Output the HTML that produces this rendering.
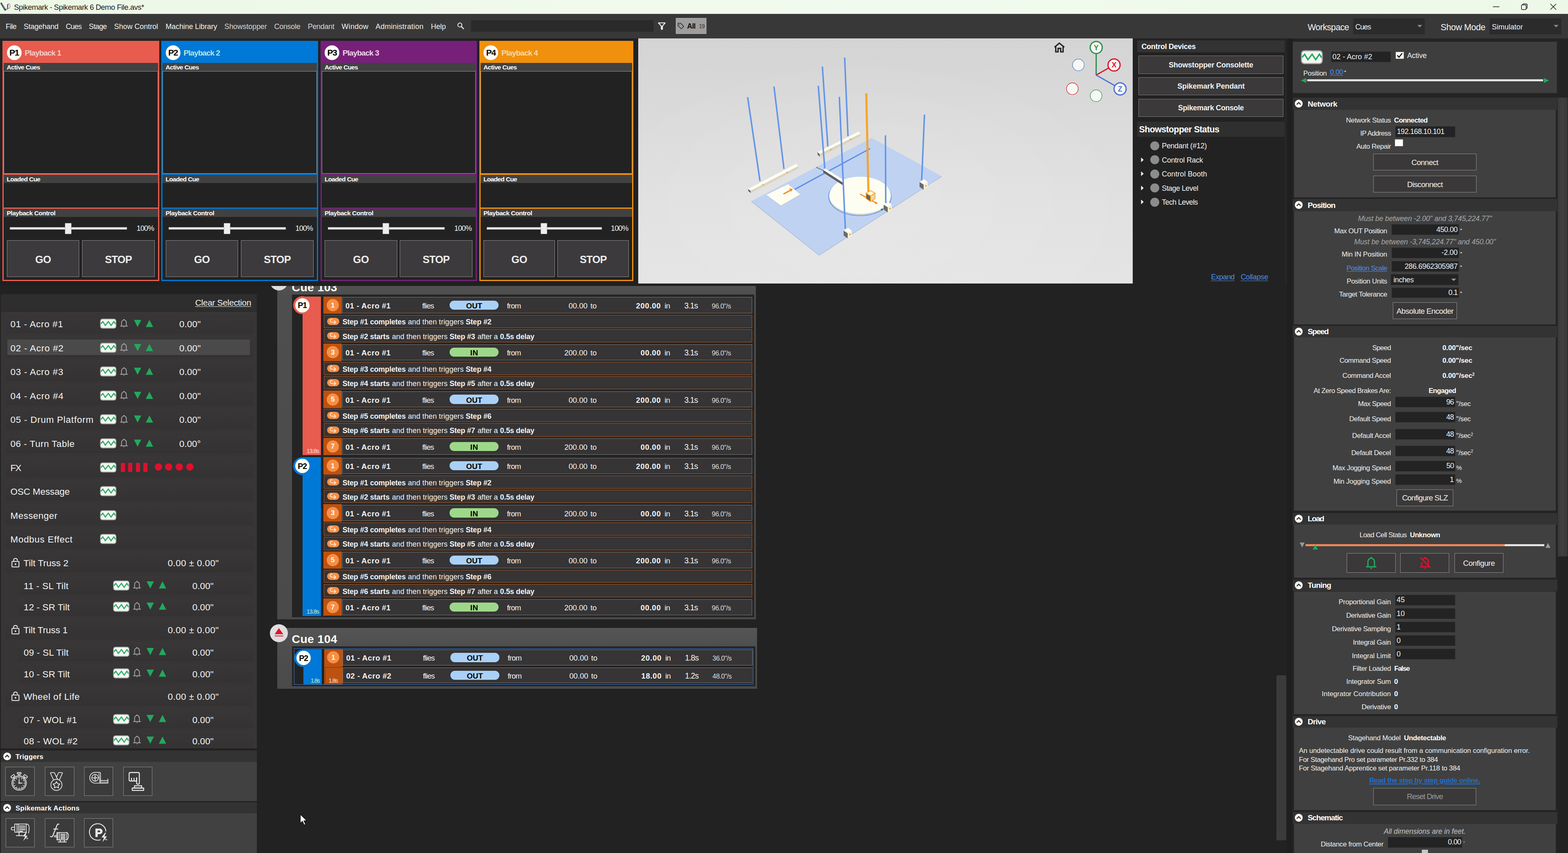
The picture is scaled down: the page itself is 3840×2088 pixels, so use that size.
<!DOCTYPE html>
<html><head><meta charset="utf-8"><title>Spikemark - Spikemark 6 Demo File.avs*</title>
<style>
html,body{margin:0;padding:0;background:#222;}
body{width:3840px;height:2088px;position:relative;overflow:hidden;font-family:"Liberation Sans",sans-serif;}
div{position:absolute;box-sizing:border-box;}
.t{position:absolute;white-space:nowrap;line-height:1;}
svg{position:absolute;overflow:visible;}
</style></head><body>
<div style="left:0px;top:0px;width:3840px;height:34px;background:linear-gradient(90deg,#ecf7e6 0%,#f1faed 40%,#f1faee 60%,#edf8e8 100%);"></div>
<svg style="left:0px;top:0px" width="30" height="34" viewBox="0 0 30 34"><path d="M3.2 8.5 L12.6 24.2" stroke="#3f4b5c" stroke-width="4.2" stroke-linecap="round"/><path d="M4.6 10.2 L11.6 22" stroke="#aab8cc" stroke-width="1.3" stroke-dasharray="1.6 1.6"/><path d="M12.4 23.6 L14 26.4 L13.2 22.8 Z" fill="#2c3440"/><path d="M13.6 23.6 Q15.6 21.6 17 22.4 Q18.6 23.2 19.2 20.4" stroke="#6e1d52" stroke-width="1.4" fill="none"/><ellipse cx="21.6" cy="15" rx="3.4" ry="5.9" transform="rotate(9 21.6 15)" fill="#fbf7ea" stroke="#8a8a8a" stroke-width="1.3"/><path d="M19.3 20.6 Q16.6 14 20.2 9.6" stroke="#7a1f5a" stroke-width="1.9" fill="none"/><ellipse cx="21.4" cy="15.2" rx="1.5" ry="3.6" transform="rotate(9 21.4 15.2)" fill="none" stroke="#d9a0c8" stroke-width="0.9"/></svg>
<span class="t" style="left:34.20px;top:9px;font-size:18.5px;color:#1a1a1a;letter-spacing:-0.492px;">Spikemark - Spikemark 6 Demo File.avs*</span>
<svg style="left:3640px;top:0" width="200" height="34" viewBox="0 0 200 34"><g stroke="#1a1a1a" stroke-width="1.5" fill="none"><path d="M16 16.5 H32"/><rect x="86" y="12" width="11.5" height="11.5" rx="2.5"/><path d="M89 12 V11.5 Q89 9.5 91 9.5 H97.5 Q100 9.5 100 12 V18.5 Q100 20.5 98 20.5 H97.5"/><path d="M157 9.5 L171 23.5 M171 9.5 L157 23.5"/></g></svg>
<div style="left:0px;top:34px;width:3840px;height:60px;background:#383838;"></div>
<span class="t" style="left:14.00px;top:56px;font-size:18px;color:#f2f2f2;letter-spacing:-0.751px;">File</span>
<span class="t" style="left:58.00px;top:56px;font-size:18px;color:#f2f2f2;letter-spacing:-0.231px;">Stagehand</span>
<span class="t" style="left:161.00px;top:56px;font-size:18px;color:#f2f2f2;letter-spacing:-0.880px;">Cues</span>
<span class="t" style="left:217.50px;top:56px;font-size:18px;color:#f2f2f2;letter-spacing:-0.608px;">Stage</span>
<span class="t" style="left:279.50px;top:56px;font-size:18px;color:#f2f2f2;letter-spacing:-0.046px;">Show Control</span>
<span class="t" style="left:405.50px;top:56px;font-size:18px;color:#f2f2f2;letter-spacing:-0.124px;">Machine Library</span>
<span class="t" style="left:549.50px;top:56px;font-size:18px;color:#d6d6d6;letter-spacing:-0.079px;">Showstopper</span>
<span class="t" style="left:671.50px;top:56px;font-size:18px;color:#d6d6d6;letter-spacing:-0.306px;">Console</span>
<span class="t" style="left:753.70px;top:56px;font-size:18px;color:#d6d6d6;letter-spacing:-0.309px;">Pendant</span>
<span class="t" style="left:836.60px;top:56px;font-size:18px;color:#f2f2f2;letter-spacing:0.280px;">Window</span>
<span class="t" style="left:919.80px;top:56px;font-size:18px;color:#f2f2f2;letter-spacing:0.239px;">Administration</span>
<span class="t" style="left:1055.20px;top:56px;font-size:18px;color:#f2f2f2;letter-spacing:-0.055px;">Help</span>
<svg style="left:1119px;top:54px" width="20" height="20" viewBox="0 0 20 20"><circle cx="7.2" cy="7.2" r="4.9" stroke="#f0f0f0" stroke-width="2" fill="none"/><path d="M10.8 10.8 L16.2 16.4" stroke="#f0f0f0" stroke-width="2.4" stroke-linecap="round"/></svg>
<div style="left:1152.5px;top:48.5px;width:448.5px;height:29px;background:#2a2a2a;border:1.5px solid #2f2f2f;"></div>
<svg style="left:1610px;top:53px" width="22" height="22" viewBox="0 0 22 22"><path d="M2.5 3 H19 L12.3 10.8 V18.6 H9.6 V10.8 Z" stroke="#f5f5f5" stroke-width="2.2" fill="none" stroke-linejoin="round"/><path d="M9.6 11 H12.3 V18.6 H9.6 Z" fill="#f5f5f5"/></svg>
<div style="left:1654.5px;top:43.5px;width:75.5px;height:39px;background:#9e9e9e;border:1px solid #b4b4b4;"></div>
<svg style="left:1659px;top:55px" width="18" height="18" viewBox="0 0 18 18"><path d="M1.5 2 H8 L15.5 9.5 L9.5 15.5 L1.5 8 Z" stroke="#222" stroke-width="1.5" fill="none" stroke-linejoin="round"/><circle cx="5" cy="5.5" r="1" fill="#222"/></svg>
<span class="t" style="left:1682.50px;top:55px;font-size:18px;color:#111;font-weight:700;letter-spacing:-0.834px;">All</span>
<span class="t" style="left:1711.50px;top:57px;font-size:14px;color:#333;letter-spacing:-1.036px;">19</span>
<span class="t" style="left:3202.50px;top:57px;font-size:21.5px;color:#f2f2f2;letter-spacing:-0.683px;">Workspace</span>
<div style="left:3312.5px;top:43.5px;width:177.5px;height:41.5px;background:#2b2b2b;border:1px solid #333;"></div>
<span class="t" style="left:3319.00px;top:57px;font-size:18px;color:#f2f2f2;letter-spacing:-1.005px;">Cues</span>
<svg style="left:3470px;top:60px" width="14" height="8"><path d="M1 1 H13 L7 7 Z" fill="#8a8a8a"/></svg>
<span class="t" style="left:3528.00px;top:57px;font-size:21.5px;color:#f2f2f2;letter-spacing:-0.449px;">Show Mode</span>
<div style="left:3646.5px;top:43.5px;width:177.5px;height:41.5px;background:#2b2b2b;border:1px solid #333;"></div>
<span class="t" style="left:3653.50px;top:57px;font-size:18px;color:#f2f2f2;">Simulator</span>
<svg style="left:3804px;top:60px" width="14" height="8"><path d="M1 1 H13 L7 7 Z" fill="#8a8a8a"/></svg>
<div style="left:6px;top:100px;width:383.5px;height:588px;background:#e85b4f;"></div>
<div style="left:16.5px;top:111px;width:36px;height:36px;background:#fffef4;border-radius:18px;"></div>
<span class="t" style="left:23.00px;top:118px;font-size:21px;color:#000;font-weight:700;letter-spacing:-1.343px;">P1</span>
<span class="t" style="left:60.50px;top:120px;font-size:19px;color:#f7cfca;font-weight:700;letter-spacing:-0.924px;">Playback 1</span>
<div style="left:9px;top:154px;width:377.5px;height:20px;background:#414141;"></div>
<span class="t" style="left:16.50px;top:157px;font-size:15.5px;color:#fff;font-weight:700;letter-spacing:-0.657px;">Active Cues</span>
<div style="left:9px;top:174px;width:377.5px;height:250.5px;background:#222;border:1px solid #9a9a9a;"></div>
<div style="left:9px;top:427.5px;width:377.5px;height:21px;background:#414141;"></div>
<span class="t" style="left:16.50px;top:431px;font-size:15.5px;color:#fff;font-weight:700;letter-spacing:-0.670px;">Loaded Cue</span>
<div style="left:9px;top:448px;width:377.5px;height:59.5px;background:#222;"></div>
<div style="left:9px;top:510.5px;width:377.5px;height:20px;background:#414141;"></div>
<span class="t" style="left:16.50px;top:514px;font-size:15.5px;color:#fff;font-weight:700;letter-spacing:-0.476px;">Playback Control</span>
<div style="left:9px;top:530.5px;width:377.5px;height:154px;background:#222;"></div>
<div style="left:24px;top:556px;width:287px;height:6px;background:#e4e4e4;border:1px solid #bdbdbd;"></div>
<div style="left:159px;top:546px;width:16px;height:27px;background:#ededed;border:1px solid #b0b0b0;border-radius:1px;"></div>
<span class="t" style="left:334.50px;top:550px;font-size:18px;color:#f2f2f2;letter-spacing:-0.884px;">100%</span>
<div style="left:16.7px;top:588px;width:177.7px;height:89.5px;background:#3c3a3c;border:1.5px solid #8f8f8f;"></div>
<span class="t" style="left:86.20px;top:623px;font-size:25.5px;color:#ececec;font-weight:700;letter-spacing:-0.485px;">GO</span>
<div style="left:201.1px;top:588px;width:177.7px;height:89.5px;background:#3c3a3c;border:1.5px solid #8f8f8f;"></div>
<span class="t" style="left:256.95px;top:623px;font-size:25.5px;color:#ececec;font-weight:700;letter-spacing:-0.742px;">STOP</span>
<div style="left:395px;top:100px;width:383.5px;height:588px;background:#0078d7;"></div>
<div style="left:405.5px;top:111px;width:36px;height:36px;background:#fffef4;border-radius:18px;"></div>
<span class="t" style="left:412.00px;top:118px;font-size:21px;color:#000;font-weight:700;letter-spacing:-1.343px;">P2</span>
<span class="t" style="left:449.50px;top:120px;font-size:19px;color:#bfe6d8;font-weight:700;letter-spacing:-0.924px;">Playback 2</span>
<div style="left:398px;top:154px;width:377.5px;height:20px;background:#414141;"></div>
<span class="t" style="left:405.50px;top:157px;font-size:15.5px;color:#fff;font-weight:700;letter-spacing:-0.657px;">Active Cues</span>
<div style="left:398px;top:174px;width:377.5px;height:250.5px;background:#222;border:1px solid #9a9a9a;"></div>
<div style="left:398px;top:427.5px;width:377.5px;height:21px;background:#414141;"></div>
<span class="t" style="left:405.50px;top:431px;font-size:15.5px;color:#fff;font-weight:700;letter-spacing:-0.670px;">Loaded Cue</span>
<div style="left:398px;top:448px;width:377.5px;height:59.5px;background:#222;"></div>
<div style="left:398px;top:510.5px;width:377.5px;height:20px;background:#414141;"></div>
<span class="t" style="left:405.50px;top:514px;font-size:15.5px;color:#fff;font-weight:700;letter-spacing:-0.476px;">Playback Control</span>
<div style="left:398px;top:530.5px;width:377.5px;height:154px;background:#222;"></div>
<div style="left:413px;top:556px;width:287px;height:6px;background:#e4e4e4;border:1px solid #bdbdbd;"></div>
<div style="left:548px;top:546px;width:16px;height:27px;background:#ededed;border:1px solid #b0b0b0;border-radius:1px;"></div>
<span class="t" style="left:723.50px;top:550px;font-size:18px;color:#f2f2f2;letter-spacing:-0.884px;">100%</span>
<div style="left:405.7px;top:588px;width:177.7px;height:89.5px;background:#3c3a3c;border:1.5px solid #8f8f8f;"></div>
<span class="t" style="left:475.20px;top:623px;font-size:25.5px;color:#ececec;font-weight:700;letter-spacing:-0.485px;">GO</span>
<div style="left:590.1px;top:588px;width:177.7px;height:89.5px;background:#3c3a3c;border:1.5px solid #8f8f8f;"></div>
<span class="t" style="left:645.95px;top:623px;font-size:25.5px;color:#ececec;font-weight:700;letter-spacing:-0.742px;">STOP</span>
<div style="left:784.5px;top:100px;width:383px;height:588px;background:#77207a;"></div>
<div style="left:795px;top:111px;width:36px;height:36px;background:#fffef4;border-radius:18px;"></div>
<span class="t" style="left:801.50px;top:118px;font-size:21px;color:#000;font-weight:700;letter-spacing:-1.343px;">P3</span>
<span class="t" style="left:839.00px;top:120px;font-size:19px;color:#ecd6ec;font-weight:700;letter-spacing:-0.924px;">Playback 3</span>
<div style="left:787.5px;top:154px;width:377px;height:20px;background:#414141;"></div>
<span class="t" style="left:795.00px;top:157px;font-size:15.5px;color:#fff;font-weight:700;letter-spacing:-0.657px;">Active Cues</span>
<div style="left:787.5px;top:174px;width:377px;height:250.5px;background:#222;border:1px solid #9a9a9a;"></div>
<div style="left:787.5px;top:427.5px;width:377px;height:21px;background:#414141;"></div>
<span class="t" style="left:795.00px;top:431px;font-size:15.5px;color:#fff;font-weight:700;letter-spacing:-0.670px;">Loaded Cue</span>
<div style="left:787.5px;top:448px;width:377px;height:59.5px;background:#222;"></div>
<div style="left:787.5px;top:510.5px;width:377px;height:20px;background:#414141;"></div>
<span class="t" style="left:795.00px;top:514px;font-size:15.5px;color:#fff;font-weight:700;letter-spacing:-0.476px;">Playback Control</span>
<div style="left:787.5px;top:530.5px;width:377px;height:154px;background:#222;"></div>
<div style="left:802.5px;top:556px;width:286.626px;height:6px;background:#e4e4e4;border:1px solid #bdbdbd;"></div>
<div style="left:937.324px;top:546px;width:16px;height:27px;background:#ededed;border:1px solid #b0b0b0;border-radius:1px;"></div>
<span class="t" style="left:1112.50px;top:550px;font-size:18px;color:#f2f2f2;letter-spacing:-0.884px;">100%</span>
<div style="left:795.2px;top:588px;width:177.468px;height:89.5px;background:#3c3a3c;border:1.5px solid #8f8f8f;"></div>
<span class="t" style="left:864.58px;top:623px;font-size:25.5px;color:#ececec;font-weight:700;letter-spacing:-0.485px;">GO</span>
<div style="left:979.332px;top:588px;width:177.468px;height:89.5px;background:#3c3a3c;border:1.5px solid #8f8f8f;"></div>
<span class="t" style="left:1035.07px;top:623px;font-size:25.5px;color:#ececec;font-weight:700;letter-spacing:-0.742px;">STOP</span>
<div style="left:1173.5px;top:100px;width:377.5px;height:588px;background:#f0900c;"></div>
<div style="left:1184px;top:111px;width:36px;height:36px;background:#fffef4;border-radius:18px;"></div>
<span class="t" style="left:1190.50px;top:118px;font-size:21px;color:#000;font-weight:700;letter-spacing:-1.343px;">P4</span>
<span class="t" style="left:1228.00px;top:120px;font-size:19px;color:#f6dca6;font-weight:700;letter-spacing:-0.924px;">Playback 4</span>
<div style="left:1176.5px;top:154px;width:371.5px;height:20px;background:#414141;"></div>
<span class="t" style="left:1184.00px;top:157px;font-size:15.5px;color:#fff;font-weight:700;letter-spacing:-0.657px;">Active Cues</span>
<div style="left:1176.5px;top:174px;width:371.5px;height:250.5px;background:#222;border:1px solid #9a9a9a;"></div>
<div style="left:1176.5px;top:427.5px;width:371.5px;height:21px;background:#414141;"></div>
<span class="t" style="left:1184.00px;top:431px;font-size:15.5px;color:#fff;font-weight:700;letter-spacing:-0.670px;">Loaded Cue</span>
<div style="left:1176.5px;top:448px;width:371.5px;height:59.5px;background:#222;"></div>
<div style="left:1176.5px;top:510.5px;width:371.5px;height:20px;background:#414141;"></div>
<span class="t" style="left:1184.00px;top:514px;font-size:15.5px;color:#fff;font-weight:700;letter-spacing:-0.476px;">Playback Control</span>
<div style="left:1176.5px;top:530.5px;width:371.5px;height:154px;background:#222;"></div>
<div style="left:1191.5px;top:556px;width:282.51px;height:6px;background:#e4e4e4;border:1px solid #bdbdbd;"></div>
<div style="left:1324.39px;top:546px;width:16px;height:27px;background:#ededed;border:1px solid #b0b0b0;border-radius:1px;"></div>
<span class="t" style="left:1496.00px;top:550px;font-size:18px;color:#f2f2f2;letter-spacing:-0.884px;">100%</span>
<div style="left:1184.2px;top:588px;width:174.92px;height:89.5px;background:#3c3a3c;border:1.5px solid #8f8f8f;"></div>
<span class="t" style="left:1252.31px;top:623px;font-size:25.5px;color:#ececec;font-weight:700;letter-spacing:-0.485px;">GO</span>
<div style="left:1365.38px;top:588px;width:174.92px;height:89.5px;background:#3c3a3c;border:1.5px solid #8f8f8f;"></div>
<span class="t" style="left:1419.84px;top:623px;font-size:25.5px;color:#ececec;font-weight:700;letter-spacing:-0.742px;">STOP</span>
<div style="left:0px;top:688px;width:1560px;height:12px;background:#202020;"></div>
<div style="left:2px;top:719.5px;width:627px;height:1112.5px;background:#373536;"></div>
<div style="left:2px;top:719.5px;width:627px;height:42.5px;background:#2e2e2e;"></div>
<div style="left:2px;top:761px;width:627px;height:2px;background:#2a2a2a;"></div>
<span class="t" style="left:478.00px;top:730px;font-size:21px;color:#f2f2f2;letter-spacing:-0.360px;text-decoration:underline;text-underline-offset:2px;text-decoration-thickness:1.3px;">Clear Selection</span>
<div style="left:14px;top:764px;width:606px;height:52px;background:linear-gradient(180deg,#383637,#343233);"></div>
<span class="t" style="left:25.50px;top:783px;font-size:22.5px;color:#f4f4f4;letter-spacing:0.681px;">01 - Acro #1</span>
<svg style="left:245.2px;top:780px" width="40" height="24.5" viewBox="0 0 40 24.5" preserveAspectRatio="none"><rect x="1" y="1" width="38" height="22.5" rx="5" fill="#f3f6f1" stroke="#a6a6a6" stroke-width="2"/><path d="M2.2 12.6 L6.8 7.2 L12.8 16.6 L20.4 7 L27 16.6 L33.8 7 L37.6 13" fill="none" stroke="#22a95e" stroke-width="2.5" stroke-linejoin="miter"/></svg>
<svg style="left:293.8px;top:780.4px" width="19" height="23" viewBox="0 0 19 23"><path d="M1 18.2 H18 M3.6 18 V10.2 C3.6 5.6 6.2 3.4 9.5 3.4 C12.8 3.4 15.4 5.6 15.4 10.2 V18" fill="none" stroke="#a8a8a8" stroke-width="1.9" stroke-linecap="round"/><circle cx="9.5" cy="2.2" r="1.5" fill="#a8a8a8"/><path d="M7.6 20.2 Q9.5 23.5 11.4 20.2 Z" fill="#a8a8a8"/></svg>
<svg style="left:327.5px;top:783px" width="18" height="18"><path d="M0 0 H18 L9 17.5 Z" fill="#22a95e"/></svg>
<svg style="left:357.3px;top:783px" width="18" height="18"><path d="M0 17.5 H18 L9 0 Z" fill="#22a95e"/></svg>
<span class="t" style="left:439.00px;top:783px;font-size:22.5px;color:#f4f4f4;letter-spacing:0.164px;">0.00"</span>
<div style="left:14px;top:822.6px;width:606px;height:52px;background:linear-gradient(180deg,#383637,#343233);"></div>
<div style="left:18px;top:831.1px;width:594px;height:37.5px;background:#4a4a4a;"></div>
<span class="t" style="left:25.50px;top:842px;font-size:22.5px;color:#f4f4f4;letter-spacing:0.765px;">02 - Acro #2</span>
<svg style="left:245.2px;top:838.6px" width="40" height="24.5" viewBox="0 0 40 24.5" preserveAspectRatio="none"><rect x="1" y="1" width="38" height="22.5" rx="5" fill="#f3f6f1" stroke="#a6a6a6" stroke-width="2"/><path d="M2.2 12.6 L6.8 7.2 L12.8 16.6 L20.4 7 L27 16.6 L33.8 7 L37.6 13" fill="none" stroke="#22a95e" stroke-width="2.5" stroke-linejoin="miter"/></svg>
<svg style="left:293.8px;top:839px" width="19" height="23" viewBox="0 0 19 23"><path d="M1 18.2 H18 M3.6 18 V10.2 C3.6 5.6 6.2 3.4 9.5 3.4 C12.8 3.4 15.4 5.6 15.4 10.2 V18" fill="none" stroke="#a8a8a8" stroke-width="1.9" stroke-linecap="round"/><circle cx="9.5" cy="2.2" r="1.5" fill="#a8a8a8"/><path d="M7.6 20.2 Q9.5 23.5 11.4 20.2 Z" fill="#a8a8a8"/></svg>
<svg style="left:327.5px;top:841.6px" width="18" height="18"><path d="M0 0 H18 L9 17.5 Z" fill="#22a95e"/></svg>
<svg style="left:357.3px;top:841.6px" width="18" height="18"><path d="M0 17.5 H18 L9 0 Z" fill="#22a95e"/></svg>
<span class="t" style="left:439.00px;top:842px;font-size:22.5px;color:#f4f4f4;letter-spacing:0.164px;">0.00"</span>
<div style="left:14px;top:881.2px;width:606px;height:52px;background:linear-gradient(180deg,#383637,#343233);"></div>
<span class="t" style="left:25.50px;top:900px;font-size:22.5px;color:#f4f4f4;letter-spacing:0.723px;">03 - Acro #3</span>
<svg style="left:245.2px;top:897.2px" width="40" height="24.5" viewBox="0 0 40 24.5" preserveAspectRatio="none"><rect x="1" y="1" width="38" height="22.5" rx="5" fill="#f3f6f1" stroke="#a6a6a6" stroke-width="2"/><path d="M2.2 12.6 L6.8 7.2 L12.8 16.6 L20.4 7 L27 16.6 L33.8 7 L37.6 13" fill="none" stroke="#22a95e" stroke-width="2.5" stroke-linejoin="miter"/></svg>
<svg style="left:293.8px;top:897.6px" width="19" height="23" viewBox="0 0 19 23"><path d="M1 18.2 H18 M3.6 18 V10.2 C3.6 5.6 6.2 3.4 9.5 3.4 C12.8 3.4 15.4 5.6 15.4 10.2 V18" fill="none" stroke="#a8a8a8" stroke-width="1.9" stroke-linecap="round"/><circle cx="9.5" cy="2.2" r="1.5" fill="#a8a8a8"/><path d="M7.6 20.2 Q9.5 23.5 11.4 20.2 Z" fill="#a8a8a8"/></svg>
<svg style="left:327.5px;top:900.2px" width="18" height="18"><path d="M0 0 H18 L9 17.5 Z" fill="#22a95e"/></svg>
<svg style="left:357.3px;top:900.2px" width="18" height="18"><path d="M0 17.5 H18 L9 0 Z" fill="#22a95e"/></svg>
<span class="t" style="left:439.00px;top:900px;font-size:22.5px;color:#f4f4f4;letter-spacing:0.164px;">0.00"</span>
<div style="left:14px;top:939.8px;width:606px;height:52px;background:linear-gradient(180deg,#383637,#343233);"></div>
<span class="t" style="left:25.50px;top:959px;font-size:22.5px;color:#f4f4f4;letter-spacing:0.765px;">04 - Acro #4</span>
<svg style="left:245.2px;top:955.8px" width="40" height="24.5" viewBox="0 0 40 24.5" preserveAspectRatio="none"><rect x="1" y="1" width="38" height="22.5" rx="5" fill="#f3f6f1" stroke="#a6a6a6" stroke-width="2"/><path d="M2.2 12.6 L6.8 7.2 L12.8 16.6 L20.4 7 L27 16.6 L33.8 7 L37.6 13" fill="none" stroke="#22a95e" stroke-width="2.5" stroke-linejoin="miter"/></svg>
<svg style="left:293.8px;top:956.2px" width="19" height="23" viewBox="0 0 19 23"><path d="M1 18.2 H18 M3.6 18 V10.2 C3.6 5.6 6.2 3.4 9.5 3.4 C12.8 3.4 15.4 5.6 15.4 10.2 V18" fill="none" stroke="#a8a8a8" stroke-width="1.9" stroke-linecap="round"/><circle cx="9.5" cy="2.2" r="1.5" fill="#a8a8a8"/><path d="M7.6 20.2 Q9.5 23.5 11.4 20.2 Z" fill="#a8a8a8"/></svg>
<svg style="left:327.5px;top:958.8px" width="18" height="18"><path d="M0 0 H18 L9 17.5 Z" fill="#22a95e"/></svg>
<svg style="left:357.3px;top:958.8px" width="18" height="18"><path d="M0 17.5 H18 L9 0 Z" fill="#22a95e"/></svg>
<span class="t" style="left:439.00px;top:959px;font-size:22.5px;color:#f4f4f4;letter-spacing:0.164px;">0.00"</span>
<div style="left:14px;top:998.4px;width:606px;height:52px;background:linear-gradient(180deg,#383637,#343233);"></div>
<span class="t" style="left:25.50px;top:1017px;font-size:22.5px;color:#f4f4f4;letter-spacing:0.775px;">05 - Drum Platform</span>
<svg style="left:245.2px;top:1014.4px" width="40" height="24.5" viewBox="0 0 40 24.5" preserveAspectRatio="none"><rect x="1" y="1" width="38" height="22.5" rx="5" fill="#f3f6f1" stroke="#a6a6a6" stroke-width="2"/><path d="M2.2 12.6 L6.8 7.2 L12.8 16.6 L20.4 7 L27 16.6 L33.8 7 L37.6 13" fill="none" stroke="#22a95e" stroke-width="2.5" stroke-linejoin="miter"/></svg>
<svg style="left:293.8px;top:1014.8px" width="19" height="23" viewBox="0 0 19 23"><path d="M1 18.2 H18 M3.6 18 V10.2 C3.6 5.6 6.2 3.4 9.5 3.4 C12.8 3.4 15.4 5.6 15.4 10.2 V18" fill="none" stroke="#a8a8a8" stroke-width="1.9" stroke-linecap="round"/><circle cx="9.5" cy="2.2" r="1.5" fill="#a8a8a8"/><path d="M7.6 20.2 Q9.5 23.5 11.4 20.2 Z" fill="#a8a8a8"/></svg>
<svg style="left:327.5px;top:1017.4px" width="18" height="18"><path d="M0 0 H18 L9 17.5 Z" fill="#22a95e"/></svg>
<svg style="left:357.3px;top:1017.4px" width="18" height="18"><path d="M0 17.5 H18 L9 0 Z" fill="#22a95e"/></svg>
<span class="t" style="left:439.00px;top:1017px;font-size:22.5px;color:#f4f4f4;letter-spacing:0.164px;">0.00"</span>
<div style="left:14px;top:1057px;width:606px;height:52px;background:linear-gradient(180deg,#383637,#343233);"></div>
<span class="t" style="left:25.50px;top:1076px;font-size:22.5px;color:#f4f4f4;letter-spacing:0.521px;">06 - Turn Table</span>
<svg style="left:245.2px;top:1073px" width="40" height="24.5" viewBox="0 0 40 24.5" preserveAspectRatio="none"><rect x="1" y="1" width="38" height="22.5" rx="5" fill="#f3f6f1" stroke="#a6a6a6" stroke-width="2"/><path d="M2.2 12.6 L6.8 7.2 L12.8 16.6 L20.4 7 L27 16.6 L33.8 7 L37.6 13" fill="none" stroke="#22a95e" stroke-width="2.5" stroke-linejoin="miter"/></svg>
<svg style="left:293.8px;top:1073.4px" width="19" height="23" viewBox="0 0 19 23"><path d="M1 18.2 H18 M3.6 18 V10.2 C3.6 5.6 6.2 3.4 9.5 3.4 C12.8 3.4 15.4 5.6 15.4 10.2 V18" fill="none" stroke="#a8a8a8" stroke-width="1.9" stroke-linecap="round"/><circle cx="9.5" cy="2.2" r="1.5" fill="#a8a8a8"/><path d="M7.6 20.2 Q9.5 23.5 11.4 20.2 Z" fill="#a8a8a8"/></svg>
<svg style="left:327.5px;top:1076px" width="18" height="18"><path d="M0 0 H18 L9 17.5 Z" fill="#22a95e"/></svg>
<svg style="left:357.3px;top:1076px" width="18" height="18"><path d="M0 17.5 H18 L9 0 Z" fill="#22a95e"/></svg>
<span class="t" style="left:439.00px;top:1076px;font-size:22.5px;color:#f4f4f4;letter-spacing:-0.038px;">0.00°</span>
<div style="left:14px;top:1115.6px;width:606px;height:52px;background:linear-gradient(180deg,#383637,#343233);"></div>
<span class="t" style="left:25.50px;top:1135px;font-size:22.5px;color:#f4f4f4;letter-spacing:-1.626px;">FX</span>
<svg style="left:245.2px;top:1131.6px" width="40" height="24.5" viewBox="0 0 40 24.5" preserveAspectRatio="none"><rect x="1" y="1" width="38" height="22.5" rx="5" fill="#f3f6f1" stroke="#a6a6a6" stroke-width="2"/><path d="M2.2 12.6 L6.8 7.2 L12.8 16.6 L20.4 7 L27 16.6 L33.8 7 L37.6 13" fill="none" stroke="#22a95e" stroke-width="2.5" stroke-linejoin="miter"/></svg>
<div style="left:296px;top:1132.6px;width:10px;height:22.5px;background:#e0102d;"></div>
<div style="left:314px;top:1132.6px;width:10px;height:22.5px;background:#e0102d;"></div>
<div style="left:332.5px;top:1132.6px;width:10px;height:22.5px;background:#e0102d;"></div>
<div style="left:350.5px;top:1132.6px;width:10px;height:22.5px;background:#e0102d;"></div>
<div style="left:378.5px;top:1134.1px;width:18px;height:18px;background:#e0102d;border-radius:9px;"></div>
<div style="left:404px;top:1134.1px;width:18px;height:18px;background:#e0102d;border-radius:9px;"></div>
<div style="left:430px;top:1134.1px;width:18px;height:18px;background:#e0102d;border-radius:9px;"></div>
<div style="left:455.5px;top:1134.1px;width:18px;height:18px;background:#e0102d;border-radius:9px;"></div>
<div style="left:14px;top:1174.2px;width:606px;height:52px;background:linear-gradient(180deg,#383637,#343233);"></div>
<span class="t" style="left:25.50px;top:1193px;font-size:22.5px;color:#f4f4f4;letter-spacing:-0.101px;">OSC Message</span>
<svg style="left:245.2px;top:1190.2px" width="40" height="24.5" viewBox="0 0 40 24.5" preserveAspectRatio="none"><rect x="1" y="1" width="38" height="22.5" rx="5" fill="#f3f6f1" stroke="#a6a6a6" stroke-width="2"/><path d="M2.2 12.6 L6.8 7.2 L12.8 16.6 L20.4 7 L27 16.6 L33.8 7 L37.6 13" fill="none" stroke="#22a95e" stroke-width="2.5" stroke-linejoin="miter"/></svg>
<div style="left:14px;top:1232.8px;width:606px;height:52px;background:linear-gradient(180deg,#383637,#343233);"></div>
<span class="t" style="left:25.50px;top:1252px;font-size:22.5px;color:#f4f4f4;letter-spacing:0.466px;">Messenger</span>
<svg style="left:245.2px;top:1248.8px" width="40" height="24.5" viewBox="0 0 40 24.5" preserveAspectRatio="none"><rect x="1" y="1" width="38" height="22.5" rx="5" fill="#f3f6f1" stroke="#a6a6a6" stroke-width="2"/><path d="M2.2 12.6 L6.8 7.2 L12.8 16.6 L20.4 7 L27 16.6 L33.8 7 L37.6 13" fill="none" stroke="#22a95e" stroke-width="2.5" stroke-linejoin="miter"/></svg>
<div style="left:14px;top:1291.4px;width:606px;height:52px;background:linear-gradient(180deg,#383637,#343233);"></div>
<span class="t" style="left:25.50px;top:1310px;font-size:22.5px;color:#f4f4f4;letter-spacing:0.699px;">Modbus Effect</span>
<svg style="left:245.2px;top:1307.4px" width="40" height="24.5" viewBox="0 0 40 24.5" preserveAspectRatio="none"><rect x="1" y="1" width="38" height="22.5" rx="5" fill="#f3f6f1" stroke="#a6a6a6" stroke-width="2"/><path d="M2.2 12.6 L6.8 7.2 L12.8 16.6 L20.4 7 L27 16.6 L33.8 7 L37.6 13" fill="none" stroke="#22a95e" stroke-width="2.5" stroke-linejoin="miter"/></svg>
<div style="left:14px;top:1349px;width:606px;height:52px;background:linear-gradient(180deg,#383637,#343233);"></div>
<svg style="left:27.5px;top:1366px" width="20" height="23" viewBox="0 0 20 23"><rect x="1.2" y="8.2" width="17.3" height="13.6" rx="1.5" fill="none" stroke="#f0f0f0" stroke-width="2"/><path d="M5.3 8 V5.6 C5.3 2.6 7.3 1.1 9.9 1.1 C12.5 1.1 14.5 2.6 14.5 5.6 V6.4" fill="none" stroke="#f0f0f0" stroke-width="2"/><circle cx="9.9" cy="15" r="1.9" fill="#f0f0f0"/></svg>
<span class="t" style="left:57.50px;top:1368px;font-size:22.5px;color:#f4f4f4;letter-spacing:0.068px;">Tilt Truss 2</span>
<span class="t" style="left:410.70px;top:1368px;font-size:22.5px;color:#f4f4f4;letter-spacing:0.407px;">0.00 ± 0.00"</span>
<div style="left:45px;top:1409.5px;width:575px;height:46px;background:linear-gradient(180deg,#383637,#343233);"></div>
<span class="t" style="left:58.00px;top:1424px;font-size:22.5px;color:#f4f4f4;letter-spacing:0.413px;">11 - SL Tilt</span>
<svg style="left:277px;top:1420.5px" width="40" height="24.5" viewBox="0 0 40 24.5" preserveAspectRatio="none"><rect x="1" y="1" width="38" height="22.5" rx="5" fill="#f3f6f1" stroke="#a6a6a6" stroke-width="2"/><path d="M2.2 12.6 L6.8 7.2 L12.8 16.6 L20.4 7 L27 16.6 L33.8 7 L37.6 13" fill="none" stroke="#22a95e" stroke-width="2.5" stroke-linejoin="miter"/></svg>
<svg style="left:326px;top:1420.5px" width="19" height="23" viewBox="0 0 19 23"><path d="M1 18.2 H18 M3.6 18 V10.2 C3.6 5.6 6.2 3.4 9.5 3.4 C12.8 3.4 15.4 5.6 15.4 10.2 V18" fill="none" stroke="#a8a8a8" stroke-width="1.9" stroke-linecap="round"/><circle cx="9.5" cy="2.2" r="1.5" fill="#a8a8a8"/><path d="M7.6 20.2 Q9.5 23.5 11.4 20.2 Z" fill="#a8a8a8"/></svg>
<svg style="left:359px;top:1423px" width="18" height="18"><path d="M0 0 H18 L9 17.5 Z" fill="#22a95e"/></svg>
<svg style="left:389px;top:1423px" width="18" height="18"><path d="M0 17.5 H18 L9 0 Z" fill="#22a95e"/></svg>
<span class="t" style="left:471.00px;top:1424px;font-size:22.5px;color:#f4f4f4;letter-spacing:0.044px;">0.00"</span>
<div style="left:45px;top:1461.5px;width:575px;height:46px;background:linear-gradient(180deg,#383637,#343233);"></div>
<span class="t" style="left:58.00px;top:1476px;font-size:22.5px;color:#f4f4f4;letter-spacing:0.143px;">12 - SR Tilt</span>
<svg style="left:277px;top:1472.5px" width="40" height="24.5" viewBox="0 0 40 24.5" preserveAspectRatio="none"><rect x="1" y="1" width="38" height="22.5" rx="5" fill="#f3f6f1" stroke="#a6a6a6" stroke-width="2"/><path d="M2.2 12.6 L6.8 7.2 L12.8 16.6 L20.4 7 L27 16.6 L33.8 7 L37.6 13" fill="none" stroke="#22a95e" stroke-width="2.5" stroke-linejoin="miter"/></svg>
<svg style="left:326px;top:1472.5px" width="19" height="23" viewBox="0 0 19 23"><path d="M1 18.2 H18 M3.6 18 V10.2 C3.6 5.6 6.2 3.4 9.5 3.4 C12.8 3.4 15.4 5.6 15.4 10.2 V18" fill="none" stroke="#a8a8a8" stroke-width="1.9" stroke-linecap="round"/><circle cx="9.5" cy="2.2" r="1.5" fill="#a8a8a8"/><path d="M7.6 20.2 Q9.5 23.5 11.4 20.2 Z" fill="#a8a8a8"/></svg>
<svg style="left:359px;top:1475px" width="18" height="18"><path d="M0 0 H18 L9 17.5 Z" fill="#22a95e"/></svg>
<svg style="left:389px;top:1475px" width="18" height="18"><path d="M0 17.5 H18 L9 0 Z" fill="#22a95e"/></svg>
<span class="t" style="left:471.00px;top:1476px;font-size:22.5px;color:#f4f4f4;letter-spacing:0.044px;">0.00"</span>
<div style="left:14px;top:1513px;width:606px;height:52px;background:linear-gradient(180deg,#383637,#343233);"></div>
<svg style="left:27.5px;top:1530px" width="20" height="23" viewBox="0 0 20 23"><rect x="1.2" y="8.2" width="17.3" height="13.6" rx="1.5" fill="none" stroke="#f0f0f0" stroke-width="2"/><path d="M5.3 8 V5.6 C5.3 2.6 7.3 1.1 9.9 1.1 C12.5 1.1 14.5 2.6 14.5 5.6 V6.4" fill="none" stroke="#f0f0f0" stroke-width="2"/><circle cx="9.9" cy="15" r="1.9" fill="#f0f0f0"/></svg>
<span class="t" style="left:57.50px;top:1532px;font-size:22.5px;color:#f4f4f4;letter-spacing:-0.082px;">Tilt Truss 1</span>
<span class="t" style="left:410.70px;top:1532px;font-size:22.5px;color:#f4f4f4;letter-spacing:0.407px;">0.00 ± 0.00"</span>
<div style="left:45px;top:1572px;width:575px;height:46px;background:linear-gradient(180deg,#383637,#343233);"></div>
<span class="t" style="left:58.00px;top:1587px;font-size:22.5px;color:#f4f4f4;letter-spacing:0.274px;">09 - SL Tilt</span>
<svg style="left:277px;top:1583px" width="40" height="24.5" viewBox="0 0 40 24.5" preserveAspectRatio="none"><rect x="1" y="1" width="38" height="22.5" rx="5" fill="#f3f6f1" stroke="#a6a6a6" stroke-width="2"/><path d="M2.2 12.6 L6.8 7.2 L12.8 16.6 L20.4 7 L27 16.6 L33.8 7 L37.6 13" fill="none" stroke="#22a95e" stroke-width="2.5" stroke-linejoin="miter"/></svg>
<svg style="left:326px;top:1583px" width="19" height="23" viewBox="0 0 19 23"><path d="M1 18.2 H18 M3.6 18 V10.2 C3.6 5.6 6.2 3.4 9.5 3.4 C12.8 3.4 15.4 5.6 15.4 10.2 V18" fill="none" stroke="#a8a8a8" stroke-width="1.9" stroke-linecap="round"/><circle cx="9.5" cy="2.2" r="1.5" fill="#a8a8a8"/><path d="M7.6 20.2 Q9.5 23.5 11.4 20.2 Z" fill="#a8a8a8"/></svg>
<svg style="left:359px;top:1585.5px" width="18" height="18"><path d="M0 0 H18 L9 17.5 Z" fill="#22a95e"/></svg>
<svg style="left:389px;top:1585.5px" width="18" height="18"><path d="M0 17.5 H18 L9 0 Z" fill="#22a95e"/></svg>
<span class="t" style="left:471.00px;top:1587px;font-size:22.5px;color:#f4f4f4;letter-spacing:0.044px;">0.00"</span>
<div style="left:45px;top:1625px;width:575px;height:46px;background:linear-gradient(180deg,#383637,#343233);"></div>
<span class="t" style="left:58.00px;top:1640px;font-size:22.5px;color:#f4f4f4;letter-spacing:0.143px;">10 - SR Tilt</span>
<svg style="left:277px;top:1636px" width="40" height="24.5" viewBox="0 0 40 24.5" preserveAspectRatio="none"><rect x="1" y="1" width="38" height="22.5" rx="5" fill="#f3f6f1" stroke="#a6a6a6" stroke-width="2"/><path d="M2.2 12.6 L6.8 7.2 L12.8 16.6 L20.4 7 L27 16.6 L33.8 7 L37.6 13" fill="none" stroke="#22a95e" stroke-width="2.5" stroke-linejoin="miter"/></svg>
<svg style="left:326px;top:1636px" width="19" height="23" viewBox="0 0 19 23"><path d="M1 18.2 H18 M3.6 18 V10.2 C3.6 5.6 6.2 3.4 9.5 3.4 C12.8 3.4 15.4 5.6 15.4 10.2 V18" fill="none" stroke="#a8a8a8" stroke-width="1.9" stroke-linecap="round"/><circle cx="9.5" cy="2.2" r="1.5" fill="#a8a8a8"/><path d="M7.6 20.2 Q9.5 23.5 11.4 20.2 Z" fill="#a8a8a8"/></svg>
<svg style="left:359px;top:1638.5px" width="18" height="18"><path d="M0 0 H18 L9 17.5 Z" fill="#22a95e"/></svg>
<svg style="left:389px;top:1638.5px" width="18" height="18"><path d="M0 17.5 H18 L9 0 Z" fill="#22a95e"/></svg>
<span class="t" style="left:471.00px;top:1640px;font-size:22.5px;color:#f4f4f4;letter-spacing:0.044px;">0.00"</span>
<div style="left:14px;top:1676px;width:606px;height:52px;background:linear-gradient(180deg,#383637,#343233);"></div>
<svg style="left:27.5px;top:1693px" width="20" height="23" viewBox="0 0 20 23"><rect x="1.2" y="8.2" width="17.3" height="13.6" rx="1.5" fill="none" stroke="#f0f0f0" stroke-width="2"/><path d="M5.3 8 V5.6 C5.3 2.6 7.3 1.1 9.9 1.1 C12.5 1.1 14.5 2.6 14.5 5.6 V6.4" fill="none" stroke="#f0f0f0" stroke-width="2"/><circle cx="9.9" cy="15" r="1.9" fill="#f0f0f0"/></svg>
<span class="t" style="left:57.50px;top:1695px;font-size:22.5px;color:#f4f4f4;letter-spacing:0.514px;">Wheel of Life</span>
<span class="t" style="left:410.70px;top:1695px;font-size:22.5px;color:#f4f4f4;letter-spacing:0.407px;">0.00 ± 0.00"</span>
<div style="left:45px;top:1736.5px;width:575px;height:46px;background:linear-gradient(180deg,#383637,#343233);"></div>
<span class="t" style="left:58.00px;top:1752px;font-size:22.5px;color:#f4f4f4;letter-spacing:0.389px;">07 - WOL #1</span>
<svg style="left:277px;top:1747.5px" width="40" height="24.5" viewBox="0 0 40 24.5" preserveAspectRatio="none"><rect x="1" y="1" width="38" height="22.5" rx="5" fill="#f3f6f1" stroke="#a6a6a6" stroke-width="2"/><path d="M2.2 12.6 L6.8 7.2 L12.8 16.6 L20.4 7 L27 16.6 L33.8 7 L37.6 13" fill="none" stroke="#22a95e" stroke-width="2.5" stroke-linejoin="miter"/></svg>
<svg style="left:326px;top:1747.5px" width="19" height="23" viewBox="0 0 19 23"><path d="M1 18.2 H18 M3.6 18 V10.2 C3.6 5.6 6.2 3.4 9.5 3.4 C12.8 3.4 15.4 5.6 15.4 10.2 V18" fill="none" stroke="#a8a8a8" stroke-width="1.9" stroke-linecap="round"/><circle cx="9.5" cy="2.2" r="1.5" fill="#a8a8a8"/><path d="M7.6 20.2 Q9.5 23.5 11.4 20.2 Z" fill="#a8a8a8"/></svg>
<svg style="left:359px;top:1750px" width="18" height="18"><path d="M0 0 H18 L9 17.5 Z" fill="#22a95e"/></svg>
<svg style="left:389px;top:1750px" width="18" height="18"><path d="M0 17.5 H18 L9 0 Z" fill="#22a95e"/></svg>
<span class="t" style="left:471.00px;top:1752px;font-size:22.5px;color:#f4f4f4;letter-spacing:0.044px;">0.00"</span>
<div style="left:45px;top:1789px;width:575px;height:46px;background:linear-gradient(180deg,#383637,#343233);"></div>
<span class="t" style="left:58.00px;top:1804px;font-size:22.5px;color:#f4f4f4;letter-spacing:0.526px;">08 - WOL #2</span>
<svg style="left:277px;top:1800px" width="40" height="24.5" viewBox="0 0 40 24.5" preserveAspectRatio="none"><rect x="1" y="1" width="38" height="22.5" rx="5" fill="#f3f6f1" stroke="#a6a6a6" stroke-width="2"/><path d="M2.2 12.6 L6.8 7.2 L12.8 16.6 L20.4 7 L27 16.6 L33.8 7 L37.6 13" fill="none" stroke="#22a95e" stroke-width="2.5" stroke-linejoin="miter"/></svg>
<svg style="left:326px;top:1800px" width="19" height="23" viewBox="0 0 19 23"><path d="M1 18.2 H18 M3.6 18 V10.2 C3.6 5.6 6.2 3.4 9.5 3.4 C12.8 3.4 15.4 5.6 15.4 10.2 V18" fill="none" stroke="#a8a8a8" stroke-width="1.9" stroke-linecap="round"/><circle cx="9.5" cy="2.2" r="1.5" fill="#a8a8a8"/><path d="M7.6 20.2 Q9.5 23.5 11.4 20.2 Z" fill="#a8a8a8"/></svg>
<svg style="left:359px;top:1802.5px" width="18" height="18"><path d="M0 0 H18 L9 17.5 Z" fill="#22a95e"/></svg>
<svg style="left:389px;top:1802.5px" width="18" height="18"><path d="M0 17.5 H18 L9 0 Z" fill="#22a95e"/></svg>
<span class="t" style="left:471.00px;top:1804px;font-size:22.5px;color:#f4f4f4;letter-spacing:0.044px;">0.00"</span>
<div style="left:0px;top:1832px;width:632px;height:6px;background:#222;"></div>
<div style="left:2px;top:1837.2px;width:627px;height:27.8px;background:#333333;"></div>
<svg style="left:8px;top:1841.8px" width="19" height="19" viewBox="0 0 20 20"><circle cx="10" cy="10" r="10" fill="#fffef6"/><path d="M5 12.3 L10 7.2 L15 12.3" fill="none" stroke="#2a2a2a" stroke-width="2.6"/></svg>
<span class="t" style="left:38.00px;top:1844px;font-size:17px;color:#fff;font-weight:700;letter-spacing:0.178px;">Triggers</span>
<div style="left:2px;top:1865px;width:627px;height:95.5px;background:#414141;"></div>
<div style="left:13.3px;top:1876.8px;width:71.8px;height:71.4px;background:#3b3b3b;border:1.5px solid #8c8c8c;"></div>
<div style="left:109.9px;top:1876.8px;width:71.8px;height:71.4px;background:#3b3b3b;border:1.5px solid #8c8c8c;"></div>
<div style="left:205.5px;top:1876.8px;width:71.8px;height:71.4px;background:#3b3b3b;border:1.5px solid #8c8c8c;"></div>
<div style="left:301.6px;top:1876.8px;width:71.8px;height:71.4px;background:#3b3b3b;border:1.5px solid #8c8c8c;"></div>
<div style="left:0px;top:1960.5px;width:632px;height:3.5px;background:#222;"></div>
<div style="left:2px;top:1963.5px;width:627px;height:27px;background:#333333;"></div>
<svg style="left:8px;top:1967.5px" width="19" height="19" viewBox="0 0 20 20"><circle cx="10" cy="10" r="10" fill="#fffef6"/><path d="M5 12.3 L10 7.2 L15 12.3" fill="none" stroke="#2a2a2a" stroke-width="2.6"/></svg>
<span class="t" style="left:38.00px;top:1970px;font-size:17px;color:#fff;font-weight:700;letter-spacing:0.269px;">Spikemark Actions</span>
<div style="left:2px;top:1990.5px;width:627px;height:97.5px;background:#414141;"></div>
<div style="left:13.9px;top:2002.6px;width:71.6px;height:71.5px;background:#3b3b3b;border:1.5px solid #8c8c8c;"></div>
<div style="left:110.1px;top:2002.6px;width:71.6px;height:71.5px;background:#3b3b3b;border:1.5px solid #8c8c8c;"></div>
<div style="left:205.8px;top:2002.6px;width:71.6px;height:71.5px;background:#3b3b3b;border:1.5px solid #8c8c8c;"></div>
<svg style="left:13.3px;top:1876.8px" width="72" height="72" viewBox="0 0 72 72"><g stroke="#ececec" fill="none" stroke-width="1.7" stroke-linecap="round" stroke-linejoin="round"><circle cx="33.9" cy="39.8" r="17.7"/><circle cx="33.9" cy="39.8" r="14.9" stroke-width="1.4"/><rect x="29.3" y="13.8" width="9.3" height="3.6" rx="0.6"/><path d="M32.2 17.4 V22 M35.7 17.4 V22"/><rect x="-4.6" y="-2.4" width="9.2" height="4.8" rx="0.5" transform="translate(18.4 23.4) rotate(-40)"/><path d="M20.6 26.4 L22.6 28.6"/><rect x="-4.6" y="-2.4" width="9.2" height="4.8" rx="0.5" transform="translate(49.4 23.4) rotate(40)"/><path d="M47.2 26.4 L45.2 28.6"/><path d="M33.90 29.00 L33.90 26.40 M39.30 30.45 L40.60 28.20 M43.25 34.40 L45.50 33.10 M44.70 39.80 L47.30 39.80 M43.25 45.20 L45.50 46.50 M39.30 49.15 L40.60 51.40 M33.90 50.60 L33.90 53.20 M28.50 49.15 L27.20 51.40 M24.55 45.20 L22.30 46.50 M23.10 39.80 L20.50 39.80 M24.55 34.40 L22.30 33.10 M28.50 30.45 L27.20 28.20 " stroke-width="1.3"/><path d="M33.9 38.2 V31.2 M35.5 39.8 H41" stroke-width="1.9"/><circle cx="33.9" cy="39.8" r="1.5" stroke-width="1.3"/></g></svg>
<svg style="left:109.9px;top:1876.8px" width="72" height="72" viewBox="0 0 72 72"><g stroke="#ececec" fill="none" stroke-width="1.7" stroke-linecap="round" stroke-linejoin="round"><circle cx="28.2" cy="44.2" r="13.6"/><path d="M21.2 32.2 L13.6 15.6 Q13.2 14.4 14.6 14.3 L22 14 Q23 14 23.5 15 L31.2 30.8"/><path d="M35.4 32.2 L42.8 15.6 Q43.2 14.4 41.8 14.3 L34.6 14 Q33.6 14 33.1 15 L28.6 24.6"/><polygon points="28.20,36.20 30.85,41.16 36.38,42.14 32.48,46.19 33.25,51.76 28.20,49.30 23.15,51.76 23.92,46.19 20.02,42.14 25.55,41.16" stroke-width="1.8"/></g></svg>
<svg style="left:205.5px;top:1876.8px" width="72" height="72" viewBox="0 0 72 72"><g stroke="#ececec" fill="none" stroke-width="1.7" stroke-linecap="round" stroke-linejoin="round"><path d="M26.9 13.6 H37 Q40.2 13.6 40.2 16.8 V40 H26.9 A13.2 13.2 0 0 1 26.9 13.6 Z"/><path d="M36 16 Q38.4 27 38 39" stroke-width="1.3"/><circle cx="26.9" cy="26.9" r="8.2"/><circle cx="26.9" cy="26.9" r="2.1"/><path d="M26.9 18.7 V24.8 M26.9 29 V35.1 M18.7 26.9 H24.8 M29 26.9 H35.1" stroke-width="1.5"/><path d="M40.2 33.6 H58.3 M58.3 29.9 V40 H40.2"/><path d="M43.5 36 V39.8 M46.5 37 V39.8 M49.5 36 V39.8 M52.5 37 V39.8 M55.5 36 V39.8" stroke-width="1.2"/></g></svg>
<svg style="left:301.6px;top:1876.8px" width="72" height="72" viewBox="0 0 72 72"><g stroke="#ececec" fill="none" stroke-width="1.7" stroke-linecap="round" stroke-linejoin="round"><g stroke-width="2.3"><path d="M32.6 27 V34 M26.3 28 V33.6 M20 28 V33.6"/><path d="M32.6 33.6 Q29.4 36.6 26.3 33.6 Q23.2 36.6 20 33.6 Q16.8 36.8 14.2 33 V17 Q14.2 14 17.2 14 H36.2 Q39.2 14 39.2 17 V39.4 Q39.2 42.6 35.9 42.6 Q32.6 42.6 32.6 39.4 V27"/><rect x="27.4" y="46.4" width="17.4" height="5.6"/><rect x="21.9" y="52" width="28" height="5.8"/></g></g></svg>
<svg style="left:13.9px;top:2002.6px" width="72" height="72" viewBox="0 0 72 72"><g stroke="#ececec" fill="none" stroke-width="1.7" stroke-linecap="round" stroke-linejoin="round"><path d="M50.3 14.2 H22.1 V34.1 H50.3 M27.7 14.2 V34.1 M31.5 14.2 V34.1 M50.3 34.1 V14.2"/><path d="M33.4 19.1 H48 M33.4 23.6 H48 M33.4 28 H48 M33.4 32.3 H42" stroke-width="2.4" stroke-linecap="butt"/><path d="M50.3 13.8 Q58 14 57.4 25 Q57 32 55.6 36.4"/><path d="M22.1 21.9 H16.6 Q13.6 21.9 13.6 25.2 Q13.6 28.5 16.6 28.5 H22.1"/><path d="M32.6 34.1 V42.4 M26 42.4 H41.5" stroke-width="2"/><path d="M50.3 34.1 L42 44 H48.1 L43.7 54.5 L53.1 42.9 H47.6 L51.4 34.1 Z" fill="#ececec" stroke-width="0.6"/><text x="49.6" y="51.4" font-family="Liberation Sans, sans-serif" font-size="6" font-weight="700" fill="#ececec" stroke="none">%</text></g></svg>
<svg style="left:110.1px;top:2002.6px" width="72" height="72" viewBox="0 0 72 72"><g stroke="#ececec" fill="none" stroke-width="1.7" stroke-linecap="round" stroke-linejoin="round"><path d="M34.3 14.6 Q31.4 13.2 29.8 16.6 L19.2 43 Q17.6 46.6 13.6 44.4 M21.6 26.3 H31.5" stroke-width="2.3"/><path d="M53.7 35.2 H29.3 V52.9 H53.7 Z M31.5 35.2 V52.9 M35.4 35.2 V52.9"/><path d="M38.2 39 H50.3 M38.2 42.4 H50.3 M38.2 46.2 H50.3 M38.2 49.6 H50.3" stroke-width="2.2" stroke-linecap="butt"/><path d="M53.7 35.2 Q58 36 57.6 44 Q57.4 50 53.7 52.9"/><path d="M29.3 42.4 H25.6 Q23.2 42.4 23.2 44 Q23.2 45.7 25.6 45.7 H29.3"/><path d="M37.6 52.9 V57.6 M47.6 52.9 V57.6 M32.6 57.9 H52.5" stroke-width="2"/></g></svg>
<svg style="left:205.8px;top:2002.6px" width="72" height="72" viewBox="0 0 72 72"><g stroke="#ececec" fill="none" stroke-width="1.7" stroke-linecap="round" stroke-linejoin="round"><path d="M39.5 52.7 A20.2 20.2 0 1 1 53.3 31.4" stroke-width="2.1"/><text x="26.6" y="45.2" font-family="Liberation Sans, sans-serif" font-weight="700" font-size="28" fill="#ececec" stroke="#ececec" stroke-width="1.3">P</text><path d="M51.4 35.7 L43.1 46.8 H49.2 L45.4 57.3 L55.3 44.6 H49.2 L53.1 35.7 Z" fill="#ececec" stroke-width="0.6"/><text x="51" y="53.6" font-family="Liberation Sans, sans-serif" font-size="6" font-weight="700" fill="#ececec" stroke="none">%</text></g></svg>
<svg style="left:734px;top:1992px" width="20" height="30" viewBox="0 0 20 30"><path d="M1.5 1.5 V23 L6.8 18.2 L10.8 27.5 L14.2 26 L10.3 17 H17.5 Z" fill="#fff" stroke="#111" stroke-width="1.4" stroke-linejoin="round"/></svg>
<div style="left:632px;top:700px;width:2500px;height:1388px;overflow:hidden;">
<div style="left:-632px;top:-700px;width:3840px;height:2088px;">
<div style="left:679.3px;top:676px;width:1171.7px;height:840px;background:linear-gradient(180deg,#545454 0px,#4e4e4e 50px,#4a4a4a 100%);"></div>
<svg style="left:661px;top:667px" width="44" height="44" viewBox="0 0 44 44"><circle cx="22" cy="22" r="22" fill="#dedede"/><path d="M22 9.4 L32.8 24.6 H11.6 Z" fill="#e1142d"/><path d="M11.6 28.7 H32.8" stroke="#e1142d" stroke-width="1.9"/></svg>
<span class="t" style="left:714.50px;top:689px;font-size:28.5px;color:#fffef2;font-weight:700;letter-spacing:0.313px;">Cue 103</span>
<div style="left:714.5px;top:721px;width:1132px;height:790px;background:#242424;border:1px solid #282828;"></div>
<div style="left:741.2px;top:725.7px;width:45px;height:388.7px;background:#e85b4f;"></div>
<div style="left:718px;top:725.2px;width:44px;height:44px;background:#e85b4f;border-radius:22px;"></div>
<div style="left:722.5px;top:729.7px;width:35px;height:35px;background:#fffef4;border-radius:17.5px;"></div>
<span class="t" style="left:729.20px;top:738px;font-size:19.5px;color:#000;font-weight:700;letter-spacing:-0.926px;">P1</span>
<span class="t" style="left:750.80px;top:1097px;font-size:14.5px;color:#fde4e0;letter-spacing:-1.094px;">13.8s</span>
<div style="left:792.2px;top:725.7px;width:44.9px;height:42.6px;background:#bd5210;"></div>
<div style="left:800px;top:732px;width:30px;height:30px;background:#f78f45;border-radius:15px;"></div>
<span class="t" style="left:810.27px;top:739px;font-size:17px;color:#fff;font-weight:700;">1</span>
<div style="left:837.6px;top:727.3px;width:1004.4px;height:39.4px;background:#363435;border:1.5px solid #7d7d7d;"></div>
<span class="t" style="left:846.00px;top:740px;font-size:18.6px;color:#f4f4f4;font-weight:700;letter-spacing:0.520px;">01 - Acro #1</span>
<span class="t" style="left:1034.00px;top:740px;font-size:18.6px;color:#f4f4f4;letter-spacing:-0.915px;">flies</span>
<div style="left:1101px;top:735.8px;width:120px;height:22.4px;background:#a9d1f7;border-radius:11.2px;"></div>
<span class="t" style="left:1141.40px;top:740px;font-size:18.6px;color:#000;font-weight:700;letter-spacing:0.079px;">OUT</span>
<span class="t" style="left:1241.50px;top:740px;font-size:18.6px;color:#f4f4f4;letter-spacing:-0.800px;">from</span>
<span class="t" style="left:1392.50px;top:740px;font-size:18.6px;color:#f4f4f4;letter-spacing:-0.069px;">00.00</span>
<span class="t" style="left:1446.00px;top:740px;font-size:18.6px;color:#f4f4f4;letter-spacing:-0.256px;">to</span>
<span class="t" style="left:1557.50px;top:740px;font-size:18.6px;color:#f4f4f4;font-weight:700;letter-spacing:0.718px;">200.00</span>
<span class="t" style="left:1627.50px;top:740px;font-size:18.6px;color:#f4f4f4;letter-spacing:-0.738px;">in</span>
<span class="t" style="left:1675.70px;top:739px;font-size:19.5px;color:#f4f4f4;letter-spacing:-0.964px;">3.1s</span>
<span class="t" style="left:1743.00px;top:741px;font-size:16.5px;color:#dcdcdc;letter-spacing:-0.544px;">96.0"/s</span>
<div style="left:793px;top:770.7px;width:1049px;height:31.9px;background:#363435;border:1.5px solid #b45a1e;"></div>
<svg style="left:801px;top:777.85px" width="30" height="18" viewBox="0 0 30 18"><rect x="0" y="0" width="30" height="17.6" rx="8.8" fill="#f78f45"/><path d="M12.5 3.6 Q7.6 3.4 7.6 7 Q7.6 10.8 12.5 10.8 H21 M17.2 6.6 L21.4 10.8 L17.2 15" fill="none" stroke="#fde3cc" stroke-width="2" stroke-linecap="round" stroke-linejoin="round"/></svg>
<span class="t" style="left:838.70px;top:779px;font-size:18px;color:#f4f4f4;font-weight:700;letter-spacing:-0.192px;">Step #1 completes</span>
<span class="t" style="left:999.00px;top:779px;font-size:18px;color:#f4f4f4;letter-spacing:0.083px;">and then triggers</span>
<span class="t" style="left:1140.40px;top:779px;font-size:18px;color:#f4f4f4;font-weight:700;letter-spacing:-0.147px;">Step #2</span>
<div style="left:793px;top:805.7px;width:1049px;height:32.3px;background:#363435;border:1.5px solid #b45a1e;"></div>
<svg style="left:801px;top:813.05px" width="30" height="18" viewBox="0 0 30 18"><rect x="0" y="0" width="30" height="17.6" rx="8.8" fill="#f78f45"/><path d="M12.5 3.6 Q7.6 3.4 7.6 7 Q7.6 10.8 12.5 10.8 H21 M17.2 6.6 L21.4 10.8 L17.2 15" fill="none" stroke="#fde3cc" stroke-width="2" stroke-linecap="round" stroke-linejoin="round"/></svg>
<span class="t" style="left:838.70px;top:815px;font-size:18px;color:#f4f4f4;font-weight:700;letter-spacing:-0.197px;">Step #2 starts</span>
<span class="t" style="left:960.00px;top:815px;font-size:18px;color:#f4f4f4;letter-spacing:0.054px;">and then triggers</span>
<span class="t" style="left:1101.00px;top:815px;font-size:18px;color:#f4f4f4;font-weight:700;letter-spacing:-0.233px;">Step #3</span>
<span class="t" style="left:1169.60px;top:815px;font-size:18px;color:#f4f4f4;letter-spacing:-0.233px;">after a</span>
<span class="t" style="left:1224.60px;top:815px;font-size:18px;color:#f4f4f4;font-weight:700;letter-spacing:-0.206px;">0.5s delay</span>
<div style="left:792.2px;top:841px;width:44.9px;height:42.6px;background:#bd5210;"></div>
<div style="left:800px;top:847.3px;width:30px;height:30px;background:#f78f45;border-radius:15px;"></div>
<span class="t" style="left:810.27px;top:854px;font-size:17px;color:#fff;font-weight:700;">3</span>
<div style="left:837.6px;top:842.6px;width:1004.4px;height:39.4px;background:#363435;border:1.5px solid #7d7d7d;"></div>
<span class="t" style="left:846.00px;top:855px;font-size:18.6px;color:#f4f4f4;font-weight:700;letter-spacing:0.520px;">01 - Acro #1</span>
<span class="t" style="left:1034.00px;top:855px;font-size:18.6px;color:#f4f4f4;letter-spacing:-0.915px;">flies</span>
<div style="left:1101px;top:851.1px;width:120px;height:22.4px;background:#9dd88a;border-radius:11.2px;"></div>
<span class="t" style="left:1151.40px;top:855px;font-size:18.6px;color:#000;font-weight:700;letter-spacing:0.700px;">IN</span>
<span class="t" style="left:1241.50px;top:855px;font-size:18.6px;color:#f4f4f4;letter-spacing:-0.800px;">from</span>
<span class="t" style="left:1382.00px;top:855px;font-size:18.6px;color:#f4f4f4;letter-spacing:-0.032px;">200.00</span>
<span class="t" style="left:1446.00px;top:855px;font-size:18.6px;color:#f4f4f4;letter-spacing:-0.256px;">to</span>
<span class="t" style="left:1568.70px;top:855px;font-size:18.6px;color:#f4f4f4;font-weight:700;letter-spacing:0.691px;">00.00</span>
<span class="t" style="left:1627.50px;top:855px;font-size:18.6px;color:#f4f4f4;letter-spacing:-0.738px;">in</span>
<span class="t" style="left:1675.70px;top:854px;font-size:19.5px;color:#f4f4f4;letter-spacing:-0.964px;">3.1s</span>
<span class="t" style="left:1743.00px;top:856px;font-size:16.5px;color:#dcdcdc;letter-spacing:-0.544px;">96.0"/s</span>
<div style="left:793px;top:886px;width:1049px;height:31.9px;background:#363435;border:1.5px solid #b45a1e;"></div>
<svg style="left:801px;top:893.15px" width="30" height="18" viewBox="0 0 30 18"><rect x="0" y="0" width="30" height="17.6" rx="8.8" fill="#f78f45"/><path d="M12.5 3.6 Q7.6 3.4 7.6 7 Q7.6 10.8 12.5 10.8 H21 M17.2 6.6 L21.4 10.8 L17.2 15" fill="none" stroke="#fde3cc" stroke-width="2" stroke-linecap="round" stroke-linejoin="round"/></svg>
<span class="t" style="left:838.70px;top:895px;font-size:18px;color:#f4f4f4;font-weight:700;letter-spacing:-0.192px;">Step #3 completes</span>
<span class="t" style="left:999.00px;top:895px;font-size:18px;color:#f4f4f4;letter-spacing:0.083px;">and then triggers</span>
<span class="t" style="left:1140.40px;top:895px;font-size:18px;color:#f4f4f4;font-weight:700;letter-spacing:-0.147px;">Step #4</span>
<div style="left:793px;top:921px;width:1049px;height:32.3px;background:#363435;border:1.5px solid #b45a1e;"></div>
<svg style="left:801px;top:928.35px" width="30" height="18" viewBox="0 0 30 18"><rect x="0" y="0" width="30" height="17.6" rx="8.8" fill="#f78f45"/><path d="M12.5 3.6 Q7.6 3.4 7.6 7 Q7.6 10.8 12.5 10.8 H21 M17.2 6.6 L21.4 10.8 L17.2 15" fill="none" stroke="#fde3cc" stroke-width="2" stroke-linecap="round" stroke-linejoin="round"/></svg>
<span class="t" style="left:838.70px;top:930px;font-size:18px;color:#f4f4f4;font-weight:700;letter-spacing:-0.197px;">Step #4 starts</span>
<span class="t" style="left:960.00px;top:930px;font-size:18px;color:#f4f4f4;letter-spacing:0.054px;">and then triggers</span>
<span class="t" style="left:1101.00px;top:930px;font-size:18px;color:#f4f4f4;font-weight:700;letter-spacing:-0.233px;">Step #5</span>
<span class="t" style="left:1169.60px;top:930px;font-size:18px;color:#f4f4f4;letter-spacing:-0.233px;">after a</span>
<span class="t" style="left:1224.60px;top:930px;font-size:18px;color:#f4f4f4;font-weight:700;letter-spacing:-0.206px;">0.5s delay</span>
<div style="left:792.2px;top:956.3px;width:44.9px;height:42.6px;background:#bd5210;"></div>
<div style="left:800px;top:962.6px;width:30px;height:30px;background:#f78f45;border-radius:15px;"></div>
<span class="t" style="left:810.27px;top:969px;font-size:17px;color:#fff;font-weight:700;">5</span>
<div style="left:837.6px;top:957.9px;width:1004.4px;height:39.4px;background:#363435;border:1.5px solid #7d7d7d;"></div>
<span class="t" style="left:846.00px;top:971px;font-size:18.6px;color:#f4f4f4;font-weight:700;letter-spacing:0.520px;">01 - Acro #1</span>
<span class="t" style="left:1034.00px;top:971px;font-size:18.6px;color:#f4f4f4;letter-spacing:-0.915px;">flies</span>
<div style="left:1101px;top:966.4px;width:120px;height:22.4px;background:#a9d1f7;border-radius:11.2px;"></div>
<span class="t" style="left:1141.40px;top:971px;font-size:18.6px;color:#000;font-weight:700;letter-spacing:0.079px;">OUT</span>
<span class="t" style="left:1241.50px;top:971px;font-size:18.6px;color:#f4f4f4;letter-spacing:-0.800px;">from</span>
<span class="t" style="left:1392.50px;top:971px;font-size:18.6px;color:#f4f4f4;letter-spacing:-0.069px;">00.00</span>
<span class="t" style="left:1446.00px;top:971px;font-size:18.6px;color:#f4f4f4;letter-spacing:-0.256px;">to</span>
<span class="t" style="left:1557.50px;top:971px;font-size:18.6px;color:#f4f4f4;font-weight:700;letter-spacing:0.718px;">200.00</span>
<span class="t" style="left:1627.50px;top:971px;font-size:18.6px;color:#f4f4f4;letter-spacing:-0.738px;">in</span>
<span class="t" style="left:1675.70px;top:970px;font-size:19.5px;color:#f4f4f4;letter-spacing:-0.964px;">3.1s</span>
<span class="t" style="left:1743.00px;top:972px;font-size:16.5px;color:#dcdcdc;letter-spacing:-0.544px;">96.0"/s</span>
<div style="left:793px;top:1001.3px;width:1049px;height:31.9px;background:#363435;border:1.5px solid #b45a1e;"></div>
<svg style="left:801px;top:1008.45px" width="30" height="18" viewBox="0 0 30 18"><rect x="0" y="0" width="30" height="17.6" rx="8.8" fill="#f78f45"/><path d="M12.5 3.6 Q7.6 3.4 7.6 7 Q7.6 10.8 12.5 10.8 H21 M17.2 6.6 L21.4 10.8 L17.2 15" fill="none" stroke="#fde3cc" stroke-width="2" stroke-linecap="round" stroke-linejoin="round"/></svg>
<span class="t" style="left:838.70px;top:1010px;font-size:18px;color:#f4f4f4;font-weight:700;letter-spacing:-0.192px;">Step #5 completes</span>
<span class="t" style="left:999.00px;top:1010px;font-size:18px;color:#f4f4f4;letter-spacing:0.083px;">and then triggers</span>
<span class="t" style="left:1140.40px;top:1010px;font-size:18px;color:#f4f4f4;font-weight:700;letter-spacing:-0.147px;">Step #6</span>
<div style="left:793px;top:1036.3px;width:1049px;height:32.3px;background:#363435;border:1.5px solid #b45a1e;"></div>
<svg style="left:801px;top:1043.65px" width="30" height="18" viewBox="0 0 30 18"><rect x="0" y="0" width="30" height="17.6" rx="8.8" fill="#f78f45"/><path d="M12.5 3.6 Q7.6 3.4 7.6 7 Q7.6 10.8 12.5 10.8 H21 M17.2 6.6 L21.4 10.8 L17.2 15" fill="none" stroke="#fde3cc" stroke-width="2" stroke-linecap="round" stroke-linejoin="round"/></svg>
<span class="t" style="left:838.70px;top:1045px;font-size:18px;color:#f4f4f4;font-weight:700;letter-spacing:-0.197px;">Step #6 starts</span>
<span class="t" style="left:960.00px;top:1045px;font-size:18px;color:#f4f4f4;letter-spacing:0.054px;">and then triggers</span>
<span class="t" style="left:1101.00px;top:1045px;font-size:18px;color:#f4f4f4;font-weight:700;letter-spacing:-0.233px;">Step #7</span>
<span class="t" style="left:1169.60px;top:1045px;font-size:18px;color:#f4f4f4;letter-spacing:-0.233px;">after a</span>
<span class="t" style="left:1224.60px;top:1045px;font-size:18px;color:#f4f4f4;font-weight:700;letter-spacing:-0.206px;">0.5s delay</span>
<div style="left:792.2px;top:1071.6px;width:44.9px;height:42.6px;background:#bd5210;"></div>
<div style="left:800px;top:1077.9px;width:30px;height:30px;background:#f78f45;border-radius:15px;"></div>
<span class="t" style="left:810.27px;top:1084px;font-size:17px;color:#fff;font-weight:700;">7</span>
<div style="left:837.6px;top:1073.2px;width:1004.4px;height:39.4px;background:#363435;border:1.5px solid #7d7d7d;"></div>
<span class="t" style="left:846.00px;top:1086px;font-size:18.6px;color:#f4f4f4;font-weight:700;letter-spacing:0.520px;">01 - Acro #1</span>
<span class="t" style="left:1034.00px;top:1086px;font-size:18.6px;color:#f4f4f4;letter-spacing:-0.915px;">flies</span>
<div style="left:1101px;top:1081.7px;width:120px;height:22.4px;background:#9dd88a;border-radius:11.2px;"></div>
<span class="t" style="left:1151.40px;top:1086px;font-size:18.6px;color:#000;font-weight:700;letter-spacing:0.700px;">IN</span>
<span class="t" style="left:1241.50px;top:1086px;font-size:18.6px;color:#f4f4f4;letter-spacing:-0.800px;">from</span>
<span class="t" style="left:1382.00px;top:1086px;font-size:18.6px;color:#f4f4f4;letter-spacing:-0.032px;">200.00</span>
<span class="t" style="left:1446.00px;top:1086px;font-size:18.6px;color:#f4f4f4;letter-spacing:-0.256px;">to</span>
<span class="t" style="left:1568.70px;top:1086px;font-size:18.6px;color:#f4f4f4;font-weight:700;letter-spacing:0.691px;">00.00</span>
<span class="t" style="left:1627.50px;top:1086px;font-size:18.6px;color:#f4f4f4;letter-spacing:-0.738px;">in</span>
<span class="t" style="left:1675.70px;top:1085px;font-size:19.5px;color:#f4f4f4;letter-spacing:-0.964px;">3.1s</span>
<span class="t" style="left:1743.00px;top:1087px;font-size:16.5px;color:#dcdcdc;letter-spacing:-0.544px;">96.0"/s</span>
<div style="left:741.2px;top:1119px;width:45px;height:388.7px;background:#0078d7;"></div>
<div style="left:718px;top:1118.5px;width:44px;height:44px;background:#0078d7;border-radius:22px;"></div>
<div style="left:722.5px;top:1123px;width:35px;height:35px;background:#fffef4;border-radius:17.5px;"></div>
<span class="t" style="left:729.20px;top:1132px;font-size:19.5px;color:#000;font-weight:700;letter-spacing:-0.926px;">P2</span>
<span class="t" style="left:750.80px;top:1490px;font-size:14.5px;color:#c6f5c0;letter-spacing:-1.094px;">13.8s</span>
<div style="left:792.2px;top:1119px;width:44.9px;height:42.6px;background:#bd5210;"></div>
<div style="left:800px;top:1125.3px;width:30px;height:30px;background:#f78f45;border-radius:15px;"></div>
<span class="t" style="left:810.27px;top:1132px;font-size:17px;color:#fff;font-weight:700;">1</span>
<div style="left:837.6px;top:1120.6px;width:1004.4px;height:39.4px;background:#363435;border:1.5px solid #7d7d7d;"></div>
<span class="t" style="left:846.00px;top:1133px;font-size:18.6px;color:#f4f4f4;font-weight:700;letter-spacing:0.520px;">01 - Acro #1</span>
<span class="t" style="left:1034.00px;top:1133px;font-size:18.6px;color:#f4f4f4;letter-spacing:-0.915px;">flies</span>
<div style="left:1101px;top:1129.1px;width:120px;height:22.4px;background:#a9d1f7;border-radius:11.2px;"></div>
<span class="t" style="left:1141.40px;top:1133px;font-size:18.6px;color:#000;font-weight:700;letter-spacing:0.079px;">OUT</span>
<span class="t" style="left:1241.50px;top:1133px;font-size:18.6px;color:#f4f4f4;letter-spacing:-0.800px;">from</span>
<span class="t" style="left:1392.50px;top:1133px;font-size:18.6px;color:#f4f4f4;letter-spacing:-0.069px;">00.00</span>
<span class="t" style="left:1446.00px;top:1133px;font-size:18.6px;color:#f4f4f4;letter-spacing:-0.256px;">to</span>
<span class="t" style="left:1557.50px;top:1133px;font-size:18.6px;color:#f4f4f4;font-weight:700;letter-spacing:0.718px;">200.00</span>
<span class="t" style="left:1627.50px;top:1133px;font-size:18.6px;color:#f4f4f4;letter-spacing:-0.738px;">in</span>
<span class="t" style="left:1675.70px;top:1132px;font-size:19.5px;color:#f4f4f4;letter-spacing:-0.964px;">3.1s</span>
<span class="t" style="left:1743.00px;top:1134px;font-size:16.5px;color:#dcdcdc;letter-spacing:-0.544px;">96.0"/s</span>
<div style="left:793px;top:1164px;width:1049px;height:31.9px;background:#363435;border:1.5px solid #b45a1e;"></div>
<svg style="left:801px;top:1171.15px" width="30" height="18" viewBox="0 0 30 18"><rect x="0" y="0" width="30" height="17.6" rx="8.8" fill="#f78f45"/><path d="M12.5 3.6 Q7.6 3.4 7.6 7 Q7.6 10.8 12.5 10.8 H21 M17.2 6.6 L21.4 10.8 L17.2 15" fill="none" stroke="#fde3cc" stroke-width="2" stroke-linecap="round" stroke-linejoin="round"/></svg>
<span class="t" style="left:838.70px;top:1173px;font-size:18px;color:#f4f4f4;font-weight:700;letter-spacing:-0.192px;">Step #1 completes</span>
<span class="t" style="left:999.00px;top:1173px;font-size:18px;color:#f4f4f4;letter-spacing:0.083px;">and then triggers</span>
<span class="t" style="left:1140.40px;top:1173px;font-size:18px;color:#f4f4f4;font-weight:700;letter-spacing:-0.147px;">Step #2</span>
<div style="left:793px;top:1199px;width:1049px;height:32.3px;background:#363435;border:1.5px solid #b45a1e;"></div>
<svg style="left:801px;top:1206.35px" width="30" height="18" viewBox="0 0 30 18"><rect x="0" y="0" width="30" height="17.6" rx="8.8" fill="#f78f45"/><path d="M12.5 3.6 Q7.6 3.4 7.6 7 Q7.6 10.8 12.5 10.8 H21 M17.2 6.6 L21.4 10.8 L17.2 15" fill="none" stroke="#fde3cc" stroke-width="2" stroke-linecap="round" stroke-linejoin="round"/></svg>
<span class="t" style="left:838.70px;top:1208px;font-size:18px;color:#f4f4f4;font-weight:700;letter-spacing:-0.197px;">Step #2 starts</span>
<span class="t" style="left:960.00px;top:1208px;font-size:18px;color:#f4f4f4;letter-spacing:0.054px;">and then triggers</span>
<span class="t" style="left:1101.00px;top:1208px;font-size:18px;color:#f4f4f4;font-weight:700;letter-spacing:-0.233px;">Step #3</span>
<span class="t" style="left:1169.60px;top:1208px;font-size:18px;color:#f4f4f4;letter-spacing:-0.233px;">after a</span>
<span class="t" style="left:1224.60px;top:1208px;font-size:18px;color:#f4f4f4;font-weight:700;letter-spacing:-0.206px;">0.5s delay</span>
<div style="left:792.2px;top:1234.3px;width:44.9px;height:42.6px;background:#bd5210;"></div>
<div style="left:800px;top:1240.6px;width:30px;height:30px;background:#f78f45;border-radius:15px;"></div>
<span class="t" style="left:810.27px;top:1247px;font-size:17px;color:#fff;font-weight:700;">3</span>
<div style="left:837.6px;top:1235.9px;width:1004.4px;height:39.4px;background:#363435;border:1.5px solid #7d7d7d;"></div>
<span class="t" style="left:846.00px;top:1249px;font-size:18.6px;color:#f4f4f4;font-weight:700;letter-spacing:0.520px;">01 - Acro #1</span>
<span class="t" style="left:1034.00px;top:1249px;font-size:18.6px;color:#f4f4f4;letter-spacing:-0.915px;">flies</span>
<div style="left:1101px;top:1244.4px;width:120px;height:22.4px;background:#9dd88a;border-radius:11.2px;"></div>
<span class="t" style="left:1151.40px;top:1249px;font-size:18.6px;color:#000;font-weight:700;letter-spacing:0.700px;">IN</span>
<span class="t" style="left:1241.50px;top:1249px;font-size:18.6px;color:#f4f4f4;letter-spacing:-0.800px;">from</span>
<span class="t" style="left:1382.00px;top:1249px;font-size:18.6px;color:#f4f4f4;letter-spacing:-0.032px;">200.00</span>
<span class="t" style="left:1446.00px;top:1249px;font-size:18.6px;color:#f4f4f4;letter-spacing:-0.256px;">to</span>
<span class="t" style="left:1568.70px;top:1249px;font-size:18.6px;color:#f4f4f4;font-weight:700;letter-spacing:0.691px;">00.00</span>
<span class="t" style="left:1627.50px;top:1249px;font-size:18.6px;color:#f4f4f4;letter-spacing:-0.738px;">in</span>
<span class="t" style="left:1675.70px;top:1248px;font-size:19.5px;color:#f4f4f4;letter-spacing:-0.964px;">3.1s</span>
<span class="t" style="left:1743.00px;top:1250px;font-size:16.5px;color:#dcdcdc;letter-spacing:-0.544px;">96.0"/s</span>
<div style="left:793px;top:1279.3px;width:1049px;height:31.9px;background:#363435;border:1.5px solid #b45a1e;"></div>
<svg style="left:801px;top:1286.45px" width="30" height="18" viewBox="0 0 30 18"><rect x="0" y="0" width="30" height="17.6" rx="8.8" fill="#f78f45"/><path d="M12.5 3.6 Q7.6 3.4 7.6 7 Q7.6 10.8 12.5 10.8 H21 M17.2 6.6 L21.4 10.8 L17.2 15" fill="none" stroke="#fde3cc" stroke-width="2" stroke-linecap="round" stroke-linejoin="round"/></svg>
<span class="t" style="left:838.70px;top:1288px;font-size:18px;color:#f4f4f4;font-weight:700;letter-spacing:-0.192px;">Step #3 completes</span>
<span class="t" style="left:999.00px;top:1288px;font-size:18px;color:#f4f4f4;letter-spacing:0.083px;">and then triggers</span>
<span class="t" style="left:1140.40px;top:1288px;font-size:18px;color:#f4f4f4;font-weight:700;letter-spacing:-0.147px;">Step #4</span>
<div style="left:793px;top:1314.3px;width:1049px;height:32.3px;background:#363435;border:1.5px solid #b45a1e;"></div>
<svg style="left:801px;top:1321.65px" width="30" height="18" viewBox="0 0 30 18"><rect x="0" y="0" width="30" height="17.6" rx="8.8" fill="#f78f45"/><path d="M12.5 3.6 Q7.6 3.4 7.6 7 Q7.6 10.8 12.5 10.8 H21 M17.2 6.6 L21.4 10.8 L17.2 15" fill="none" stroke="#fde3cc" stroke-width="2" stroke-linecap="round" stroke-linejoin="round"/></svg>
<span class="t" style="left:838.70px;top:1323px;font-size:18px;color:#f4f4f4;font-weight:700;letter-spacing:-0.197px;">Step #4 starts</span>
<span class="t" style="left:960.00px;top:1323px;font-size:18px;color:#f4f4f4;letter-spacing:0.054px;">and then triggers</span>
<span class="t" style="left:1101.00px;top:1323px;font-size:18px;color:#f4f4f4;font-weight:700;letter-spacing:-0.233px;">Step #5</span>
<span class="t" style="left:1169.60px;top:1323px;font-size:18px;color:#f4f4f4;letter-spacing:-0.233px;">after a</span>
<span class="t" style="left:1224.60px;top:1323px;font-size:18px;color:#f4f4f4;font-weight:700;letter-spacing:-0.206px;">0.5s delay</span>
<div style="left:792.2px;top:1349.6px;width:44.9px;height:42.6px;background:#bd5210;"></div>
<div style="left:800px;top:1355.9px;width:30px;height:30px;background:#f78f45;border-radius:15px;"></div>
<span class="t" style="left:810.27px;top:1362px;font-size:17px;color:#fff;font-weight:700;">5</span>
<div style="left:837.6px;top:1351.2px;width:1004.4px;height:39.4px;background:#363435;border:1.5px solid #7d7d7d;"></div>
<span class="t" style="left:846.00px;top:1364px;font-size:18.6px;color:#f4f4f4;font-weight:700;letter-spacing:0.520px;">01 - Acro #1</span>
<span class="t" style="left:1034.00px;top:1364px;font-size:18.6px;color:#f4f4f4;letter-spacing:-0.915px;">flies</span>
<div style="left:1101px;top:1359.7px;width:120px;height:22.4px;background:#a9d1f7;border-radius:11.2px;"></div>
<span class="t" style="left:1141.40px;top:1364px;font-size:18.6px;color:#000;font-weight:700;letter-spacing:0.079px;">OUT</span>
<span class="t" style="left:1241.50px;top:1364px;font-size:18.6px;color:#f4f4f4;letter-spacing:-0.800px;">from</span>
<span class="t" style="left:1392.50px;top:1364px;font-size:18.6px;color:#f4f4f4;letter-spacing:-0.069px;">00.00</span>
<span class="t" style="left:1446.00px;top:1364px;font-size:18.6px;color:#f4f4f4;letter-spacing:-0.256px;">to</span>
<span class="t" style="left:1557.50px;top:1364px;font-size:18.6px;color:#f4f4f4;font-weight:700;letter-spacing:0.718px;">200.00</span>
<span class="t" style="left:1627.50px;top:1364px;font-size:18.6px;color:#f4f4f4;letter-spacing:-0.738px;">in</span>
<span class="t" style="left:1675.70px;top:1363px;font-size:19.5px;color:#f4f4f4;letter-spacing:-0.964px;">3.1s</span>
<span class="t" style="left:1743.00px;top:1365px;font-size:16.5px;color:#dcdcdc;letter-spacing:-0.544px;">96.0"/s</span>
<div style="left:793px;top:1394.6px;width:1049px;height:31.9px;background:#363435;border:1.5px solid #b45a1e;"></div>
<svg style="left:801px;top:1401.75px" width="30" height="18" viewBox="0 0 30 18"><rect x="0" y="0" width="30" height="17.6" rx="8.8" fill="#f78f45"/><path d="M12.5 3.6 Q7.6 3.4 7.6 7 Q7.6 10.8 12.5 10.8 H21 M17.2 6.6 L21.4 10.8 L17.2 15" fill="none" stroke="#fde3cc" stroke-width="2" stroke-linecap="round" stroke-linejoin="round"/></svg>
<span class="t" style="left:838.70px;top:1403px;font-size:18px;color:#f4f4f4;font-weight:700;letter-spacing:-0.192px;">Step #5 completes</span>
<span class="t" style="left:999.00px;top:1403px;font-size:18px;color:#f4f4f4;letter-spacing:0.083px;">and then triggers</span>
<span class="t" style="left:1140.40px;top:1403px;font-size:18px;color:#f4f4f4;font-weight:700;letter-spacing:-0.147px;">Step #6</span>
<div style="left:793px;top:1429.6px;width:1049px;height:32.3px;background:#363435;border:1.5px solid #b45a1e;"></div>
<svg style="left:801px;top:1436.95px" width="30" height="18" viewBox="0 0 30 18"><rect x="0" y="0" width="30" height="17.6" rx="8.8" fill="#f78f45"/><path d="M12.5 3.6 Q7.6 3.4 7.6 7 Q7.6 10.8 12.5 10.8 H21 M17.2 6.6 L21.4 10.8 L17.2 15" fill="none" stroke="#fde3cc" stroke-width="2" stroke-linecap="round" stroke-linejoin="round"/></svg>
<span class="t" style="left:838.70px;top:1439px;font-size:18px;color:#f4f4f4;font-weight:700;letter-spacing:-0.197px;">Step #6 starts</span>
<span class="t" style="left:960.00px;top:1439px;font-size:18px;color:#f4f4f4;letter-spacing:0.054px;">and then triggers</span>
<span class="t" style="left:1101.00px;top:1439px;font-size:18px;color:#f4f4f4;font-weight:700;letter-spacing:-0.233px;">Step #7</span>
<span class="t" style="left:1169.60px;top:1439px;font-size:18px;color:#f4f4f4;letter-spacing:-0.233px;">after a</span>
<span class="t" style="left:1224.60px;top:1439px;font-size:18px;color:#f4f4f4;font-weight:700;letter-spacing:-0.206px;">0.5s delay</span>
<div style="left:792.2px;top:1464.9px;width:44.9px;height:42.6px;background:#bd5210;"></div>
<div style="left:800px;top:1471.2px;width:30px;height:30px;background:#f78f45;border-radius:15px;"></div>
<span class="t" style="left:810.27px;top:1478px;font-size:17px;color:#fff;font-weight:700;">7</span>
<div style="left:837.6px;top:1466.5px;width:1004.4px;height:39.4px;background:#363435;border:1.5px solid #7d7d7d;"></div>
<span class="t" style="left:846.00px;top:1479px;font-size:18.6px;color:#f4f4f4;font-weight:700;letter-spacing:0.520px;">01 - Acro #1</span>
<span class="t" style="left:1034.00px;top:1479px;font-size:18.6px;color:#f4f4f4;letter-spacing:-0.915px;">flies</span>
<div style="left:1101px;top:1475px;width:120px;height:22.4px;background:#9dd88a;border-radius:11.2px;"></div>
<span class="t" style="left:1151.40px;top:1479px;font-size:18.6px;color:#000;font-weight:700;letter-spacing:0.700px;">IN</span>
<span class="t" style="left:1241.50px;top:1479px;font-size:18.6px;color:#f4f4f4;letter-spacing:-0.800px;">from</span>
<span class="t" style="left:1382.00px;top:1479px;font-size:18.6px;color:#f4f4f4;letter-spacing:-0.032px;">200.00</span>
<span class="t" style="left:1446.00px;top:1479px;font-size:18.6px;color:#f4f4f4;letter-spacing:-0.256px;">to</span>
<span class="t" style="left:1568.70px;top:1479px;font-size:18.6px;color:#f4f4f4;font-weight:700;letter-spacing:0.691px;">00.00</span>
<span class="t" style="left:1627.50px;top:1479px;font-size:18.6px;color:#f4f4f4;letter-spacing:-0.738px;">in</span>
<span class="t" style="left:1675.70px;top:1478px;font-size:19.5px;color:#f4f4f4;letter-spacing:-0.964px;">3.1s</span>
<span class="t" style="left:1743.00px;top:1480px;font-size:16.5px;color:#dcdcdc;letter-spacing:-0.544px;">96.0"/s</span>
<div style="left:679.3px;top:1537px;width:1174.7px;height:148.5px;background:linear-gradient(180deg,#555 0px,#4e4e4e 50px,#4a4a4a 100%);"></div>
<svg style="left:661px;top:1528px" width="44" height="44" viewBox="0 0 44 44"><circle cx="22" cy="22" r="22" fill="#dedede"/><path d="M22 9.4 L32.8 24.6 H11.6 Z" fill="#e1142d"/><path d="M11.6 28.7 H32.8" stroke="#e1142d" stroke-width="1.9"/></svg>
<span class="t" style="left:714.50px;top:1550px;font-size:28.5px;color:#fffef2;font-weight:700;letter-spacing:0.313px;">Cue 104</span>
<div style="left:714.5px;top:1582.3px;width:1135.5px;height:97.7px;background:#242424;border:1px solid #282828;"></div>
<div style="left:719.5px;top:1587px;width:1125.5px;height:88.7px;background:#232323;border:1.5px solid #3c7bd0;"></div>
<div style="left:742.5px;top:1588.5px;width:45.5px;height:86px;background:#0078d7;"></div>
<div style="left:720.5px;top:1588.5px;width:44px;height:44px;background:#0078d7;border-radius:22px;"></div>
<div style="left:725.5px;top:1593px;width:35px;height:35px;background:#fffef4;border-radius:17.5px;"></div>
<span class="t" style="left:732.20px;top:1602px;font-size:19.5px;color:#000;font-weight:700;letter-spacing:-0.926px;">P2</span>
<span class="t" style="left:760.70px;top:1659px;font-size:14.5px;color:#c6f5c0;letter-spacing:-1.427px;">1.8s</span>
<div style="left:793.7px;top:1588.7px;width:45.3px;height:86.3px;background:#bd5210;"></div>
<div style="left:801px;top:1594px;width:30px;height:30px;background:#f78f45;border-radius:15px;"></div>
<span class="t" style="left:811.57px;top:1601px;font-size:17px;color:#fff;font-weight:700;">1</span>
<span class="t" style="left:804.80px;top:1659px;font-size:14.5px;color:#fde8d8;letter-spacing:-1.427px;">1.8s</span>
<div style="left:839.35px;top:1590px;width:1004.15px;height:38.8px;background:#363435;border:1.5px solid #7d7d7d;"></div>
<span class="t" style="left:847.75px;top:1602px;font-size:18.6px;color:#f4f4f4;font-weight:700;letter-spacing:0.520px;">01 - Acro #1</span>
<span class="t" style="left:1035.75px;top:1602px;font-size:18.6px;color:#f4f4f4;letter-spacing:-0.915px;">flies</span>
<div style="left:1102.75px;top:1598.2px;width:120px;height:22.4px;background:#a9d1f7;border-radius:11.2px;"></div>
<span class="t" style="left:1143.15px;top:1602px;font-size:18.6px;color:#000;font-weight:700;letter-spacing:0.079px;">OUT</span>
<span class="t" style="left:1243.25px;top:1602px;font-size:18.6px;color:#f4f4f4;letter-spacing:-0.800px;">from</span>
<span class="t" style="left:1394.25px;top:1602px;font-size:18.6px;color:#f4f4f4;letter-spacing:-0.069px;">00.00</span>
<span class="t" style="left:1447.75px;top:1602px;font-size:18.6px;color:#f4f4f4;letter-spacing:-0.256px;">to</span>
<span class="t" style="left:1569.95px;top:1602px;font-size:18.6px;color:#f4f4f4;font-weight:700;letter-spacing:0.791px;">20.00</span>
<span class="t" style="left:1629.25px;top:1602px;font-size:18.6px;color:#f4f4f4;letter-spacing:-0.738px;">in</span>
<span class="t" style="left:1677.45px;top:1601px;font-size:19.5px;color:#f4f4f4;letter-spacing:-0.964px;">1.8s</span>
<span class="t" style="left:1744.75px;top:1603px;font-size:16.5px;color:#dcdcdc;letter-spacing:-0.544px;">36.0"/s</span>
<div style="left:839.35px;top:1633.6px;width:1004.15px;height:38.8px;background:#363435;border:1.5px solid #7d7d7d;"></div>
<span class="t" style="left:847.75px;top:1646px;font-size:18.6px;color:#f4f4f4;font-weight:700;letter-spacing:0.520px;">02 - Acro #2</span>
<span class="t" style="left:1035.75px;top:1646px;font-size:18.6px;color:#f4f4f4;letter-spacing:-0.915px;">flies</span>
<div style="left:1102.75px;top:1641.8px;width:120px;height:22.4px;background:#a9d1f7;border-radius:11.2px;"></div>
<span class="t" style="left:1143.15px;top:1646px;font-size:18.6px;color:#000;font-weight:700;letter-spacing:0.079px;">OUT</span>
<span class="t" style="left:1243.25px;top:1646px;font-size:18.6px;color:#f4f4f4;letter-spacing:-0.800px;">from</span>
<span class="t" style="left:1394.25px;top:1646px;font-size:18.6px;color:#f4f4f4;letter-spacing:-0.069px;">00.00</span>
<span class="t" style="left:1447.75px;top:1646px;font-size:18.6px;color:#f4f4f4;letter-spacing:-0.256px;">to</span>
<span class="t" style="left:1570.45px;top:1646px;font-size:18.6px;color:#f4f4f4;font-weight:700;letter-spacing:0.691px;">18.00</span>
<span class="t" style="left:1629.25px;top:1646px;font-size:18.6px;color:#f4f4f4;letter-spacing:-0.738px;">in</span>
<span class="t" style="left:1677.45px;top:1645px;font-size:19.5px;color:#f4f4f4;letter-spacing:-0.964px;">1.2s</span>
<span class="t" style="left:1744.75px;top:1647px;font-size:16.5px;color:#dcdcdc;letter-spacing:-0.544px;">48.0"/s</span>
<div style="left:795.5px;top:1633px;width:1047px;height:40.5px;border:1.5px dotted #1a1a2a;"></div>
</div></div>
<div style="left:3126px;top:1653px;width:24px;height:404px;background:#3b3b3b;border-radius:2px;"></div>
<div style="left:1563px;top:94px;width:1211.3px;height:599.7px;background:radial-gradient(ellipse 80% 90% at 45% 70%, rgba(255,255,255,0.16) 0%, rgba(255,255,255,0) 70%),linear-gradient(180deg,#d4d4d4 0%,#dbdbdb 35%,#e1e1e1 70%,#e4e4e4 100%);"></div>
<svg style="left:0;top:0" width="3840" height="700" viewBox="0 0 3840 700"><polygon points="1840,492.3 2006,624.2 2305.8,431.1 2134.7,337.5" fill="#bfd2f2" /><polyline points="1840,492.8 2006,625 2305.8,431.8" fill="none" stroke="#a9b6cc" stroke-width="1.4"/><line x1="2014" y1="163" x2="2027.3" y2="358.7" stroke="#6394e8" stroke-width="3.6"/><line x1="2068.5" y1="141" x2="2076.7" y2="333.7" stroke="#6394e8" stroke-width="3.6"/><polygon points="2001.8,372.4 2102.2,322.5 2107.7,327 2007.3,376.9" fill="#fdfdf2" /><polygon points="2007.3,376.9 2107.7,327 2107.7,333 2007.8,383.7" fill="#dad4c2" /><polygon points="2001.8,372.4 2007.3,376.9 2007.8,383.7 2002.3,378.7" fill="#6a6a6a" /><circle cx="2034.5" cy="366" r="1.8" fill="#f5a020"/><circle cx="2083.5" cy="341" r="1.8" fill="#f5a020"/><line x1="1946.1" y1="463.6" x2="2130.9" y2="363.7" stroke="#5b8de2" stroke-width="3"/><ellipse cx="2106" cy="481" rx="76.5" ry="46.8" fill="none" stroke="#5b8de2" stroke-width="1.6"/><ellipse cx="2106.3" cy="479.8" rx="75.5" ry="46.2" fill="#c9c9c0"/><ellipse cx="2106.3" cy="478.2" rx="75.5" ry="45.6" fill="#fdfdf1"/><line x1="1998.6" y1="409.1" x2="2016" y2="417.4" stroke="#555" stroke-width="1.2"/><polygon points="2016,416.1 2021,412.4 2071,443.6 2064.8,447.4" fill="#fdfdf2" /><polygon points="2016,416.1 2064.8,447.4 2063.5,452.9 2016,422.4" fill="#5e5e5e" /><line x1="1831" y1="238" x2="1861.2" y2="443.6" stroke="#6394e8" stroke-width="3.6"/><line x1="1895.5" y1="212" x2="1919.9" y2="413.6" stroke="#6394e8" stroke-width="3.6"/><line x1="2004" y1="210" x2="2019.8" y2="412.4" stroke="#6394e8" stroke-width="3.6"/><polygon points="1832,462.4 1949.4,401.2 1955.4,406.2 1838,466.9" fill="#fdfdf2" /><polygon points="1838,466.9 1955.4,406.2 1955.4,412.4 1838.7,472.4" fill="#dad4c2" /><polygon points="1832,462.4 1838,466.9 1838.7,472.4 1832.5,467.9" fill="#6a6a6a" /><circle cx="1868.5" cy="452" r="1.8" fill="#f5a020"/><circle cx="1927.5" cy="422" r="1.8" fill="#f5a020"/><polygon points="1876.9,478 1912.4,504.8 1959.9,477.3 1959.9,476.1 1912.4,503.6" fill="#b9b9b2" /><polygon points="1876.9,476.8 1929.9,451.1 1959.9,476.1 1912.4,503.6" fill="#fdfdf1" /><path d="M1918.6 474.8 L1938 464.6" stroke="#f58a1c" stroke-width="3"/><path d="M1933 460.8 L1941.5 463 L1937 469.5 Z" fill="#f58a1c"/><line x1="2121.5" y1="228" x2="2126.7" y2="470" stroke="#f7a428" stroke-width="5"/><path d="M2106 474.8 L2146 497" stroke="#f58a1c" stroke-width="2.6"/><path d="M2142.5 499.5 L2149.5 498.8 L2145.5 493.2 Z" fill="#f58a1c"/><polygon points="2121,473 2132,466.5 2143,473 2132,480" fill="#fdf6e0" stroke="#f5a020" stroke-width="1.6"/><polygon points="2121,473 2132,480 2132,493.5 2121,486" fill="#6b6458" stroke="#f5a020" stroke-width="1.6"/><polygon points="2132,480 2143,473 2143,486 2132,493.5" fill="#e9d9b4" stroke="#f5a020" stroke-width="1.6"/><line x1="2055.5" y1="237" x2="2070.2" y2="559.8" stroke="#6394e8" stroke-width="3.6"/><line x1="2168.4" y1="331.2" x2="2169.2" y2="497.3" stroke="#6394e8" stroke-width="3.6"/><line x1="2264" y1="280.5" x2="2257.1" y2="442.4" stroke="#6394e8" stroke-width="3.6"/><polygon points="2066,564.5 2077,557.5 2086,564.5 2076,571" fill="#fcfcf0" /><polygon points="2066,564.5 2076,571 2076,583.5 2066,576.5" fill="#6b6b6b" /><polygon points="2076,571 2086,564.5 2086,576.5 2076,583.5" fill="#f3efdf" /><circle cx="2081.5" cy="574" r="2" fill="#f5a020"/><polygon points="2164,501 2175,494 2184,501 2174,507.5" fill="#fcfcf0" /><polygon points="2164,501 2174,507.5 2174,520 2164,513" fill="#6b6b6b" /><polygon points="2174,507.5 2184,501 2184,513 2174,520" fill="#f3efdf" /><circle cx="2179.5" cy="510.5" r="2" fill="#f5a020"/><polygon points="2252,445.5 2263,438.5 2272,445.5 2262,452" fill="#fcfcf0" /><polygon points="2252,445.5 2262,452 2262,464.5 2252,457.5" fill="#6b6b6b" /><polygon points="2262,452 2272,445.5 2272,457.5 2262,464.5" fill="#f3efdf" /><circle cx="2267.5" cy="455" r="2" fill="#f5a020"/><circle cx="2159.7" cy="513" r="2.4" fill="#1e8a44"/><path d="M2582.5 115.5 L2594.3 105.5 L2606.5 115.5 M2585.5 113.5 V127 H2591.2 V118.3 H2597.6 V127 H2603.5 V113.5" fill="none" stroke="#222" stroke-width="3.2" stroke-linejoin="miter"/><line x1="2684.4" y1="183.8" x2="2684.6" y2="132" stroke="#2a8f4e" stroke-width="3"/><line x1="2684.4" y1="183.8" x2="2715" y2="166.5" stroke="#e0102d" stroke-width="3"/><line x1="2684.4" y1="183.8" x2="2730" y2="209.5" stroke="#4a72d6" stroke-width="3"/><circle cx="2684.6" cy="116.3" r="14.8" fill="#f6f6f1" stroke="#2a8f4e" stroke-width="3"/><text x="2684.6" y="122.6" text-anchor="middle" font-family="Liberation Sans, sans-serif" font-weight="700" font-size="17.5" fill="#2a8f4e">Y</text><circle cx="2728.3" cy="159" r="14.8" fill="#f6f6f1" stroke="#e0102d" stroke-width="3"/><text x="2728.3" y="165.3" text-anchor="middle" font-family="Liberation Sans, sans-serif" font-weight="700" font-size="17.5" fill="#e0102d">X</text><circle cx="2743.1" cy="217.6" r="14.8" fill="#f6f6f1" stroke="#4a72d6" stroke-width="3"/><text x="2743.1" y="223.9" text-anchor="middle" font-family="Liberation Sans, sans-serif" font-weight="700" font-size="17.5" fill="#4a72d6">Z</text><circle cx="2640.9" cy="159" r="14.3" fill="#f8f8f3" stroke="#4a72d6" stroke-width="1.2"/><circle cx="2626.2" cy="217.2" r="14.3" fill="#f8f8f3" stroke="#cf1020" stroke-width="1.2"/><circle cx="2684.4" cy="234.5" r="14.3" fill="#f8f8f3" stroke="#2a8f4e" stroke-width="1.2"/></svg>
<div style="left:2774.5px;top:94px;width:377.5px;height:600px;background:#222222;"></div>
<div style="left:2785px;top:98.5px;width:361px;height:29px;background:#333333;"></div>
<span class="t" style="left:2795.40px;top:105px;font-size:18px;color:#fff;font-weight:700;letter-spacing:-0.283px;">Control Devices</span>
<div style="left:2788px;top:136px;width:355.2px;height:44.7px;background:#3b393a;border:1.5px solid #828282;"></div>
<span class="t" style="left:2862.30px;top:150px;font-size:18px;color:#f4f4f4;font-weight:700;letter-spacing:-0.237px;">Showstopper Consolette</span>
<div style="left:2788px;top:188.9px;width:355.2px;height:44.5px;background:#3b393a;border:1.5px solid #828282;"></div>
<span class="t" style="left:2883.50px;top:202px;font-size:18px;color:#f4f4f4;font-weight:700;letter-spacing:-0.145px;">Spikemark Pendant</span>
<div style="left:2788px;top:241.5px;width:355.2px;height:44.3px;background:#3b393a;border:1.5px solid #828282;"></div>
<span class="t" style="left:2885.00px;top:255px;font-size:18px;color:#f4f4f4;font-weight:700;letter-spacing:-0.357px;">Spikemark Console</span>
<div style="left:2785px;top:298px;width:361px;height:36.5px;background:#2f2f2f;"></div>
<span class="t" style="left:2789.50px;top:307px;font-size:21.5px;color:#fff;font-weight:700;letter-spacing:-0.647px;">Showstopper Status</span>
<div style="left:2817px;top:345.8px;width:22px;height:22px;background:#8c8c8c;border-radius:11px;"></div>
<span class="t" style="left:2845.20px;top:348px;font-size:18px;color:#f2f2f2;letter-spacing:-0.299px;">Pendant (#12)</span>
<div style="left:2817px;top:380.3px;width:22px;height:22px;background:#8c8c8c;border-radius:11px;"></div>
<span class="t" style="left:2845.20px;top:383px;font-size:18px;color:#f2f2f2;letter-spacing:-0.278px;">Control Rack</span>
<svg style="left:2794.3px;top:384.8px" width="8" height="13"><path d="M0.5 0.5 V12 L6.8 6.2 Z" fill="#f2f2f2"/></svg>
<div style="left:2817px;top:414.8px;width:22px;height:22px;background:#8c8c8c;border-radius:11px;"></div>
<span class="t" style="left:2845.20px;top:417px;font-size:18px;color:#f2f2f2;letter-spacing:0.072px;">Control Booth</span>
<svg style="left:2794.3px;top:419.3px" width="8" height="13"><path d="M0.5 0.5 V12 L6.8 6.2 Z" fill="#f2f2f2"/></svg>
<div style="left:2817px;top:449.3px;width:22px;height:22px;background:#8c8c8c;border-radius:11px;"></div>
<span class="t" style="left:2845.20px;top:452px;font-size:18px;color:#f2f2f2;letter-spacing:-0.552px;">Stage Level</span>
<svg style="left:2794.3px;top:453.8px" width="8" height="13"><path d="M0.5 0.5 V12 L6.8 6.2 Z" fill="#f2f2f2"/></svg>
<div style="left:2817px;top:483.8px;width:22px;height:22px;background:#8c8c8c;border-radius:11px;"></div>
<span class="t" style="left:2845.20px;top:486px;font-size:18px;color:#f2f2f2;letter-spacing:-0.641px;">Tech Levels</span>
<svg style="left:2794.3px;top:488.3px" width="8" height="13"><path d="M0.5 0.5 V12 L6.8 6.2 Z" fill="#f2f2f2"/></svg>
<span class="t" style="left:2965.80px;top:669px;font-size:18px;color:#4d8df0;letter-spacing:-0.592px;text-decoration:underline;text-underline-offset:2.5px;text-decoration-thickness:1.3px;">Expand</span>
<span class="t" style="left:3038.40px;top:669px;font-size:18px;color:#4d8df0;letter-spacing:-0.355px;text-decoration:underline;text-underline-offset:2.5px;text-decoration-thickness:1.3px;">Collapse</span>
<div style="left:3146px;top:94px;width:6px;height:600px;background:#262626;"></div>
<div style="left:3152px;top:94px;width:688px;height:1994px;background:#242424;"></div>
<div style="left:3152px;top:94px;width:13px;height:1994px;background:#1f1f1f;"></div>
<div style="left:3166px;top:101.5px;width:647px;height:126.5px;background:#3e3e3e;border:1.5px solid #383838;"></div>
<svg style="left:3185.5px;top:123px" width="53.5" height="34" viewBox="0 0 40 24.5" preserveAspectRatio="none"><rect x="1" y="1" width="38" height="22.5" rx="5" fill="#f3f6f1" stroke="#a6a6a6" stroke-width="2"/><path d="M2.2 12.6 L6.8 7.2 L12.8 16.6 L20.4 7 L27 16.6 L33.8 7 L37.6 13" fill="none" stroke="#22a95e" stroke-width="2.5" stroke-linejoin="miter"/></svg>
<div style="left:3260px;top:126px;width:146px;height:25.7px;background:#232323;border:1px solid #2c2c2c;"></div>
<span class="t" style="left:3263.00px;top:130px;font-size:18px;color:#f2f2f2;letter-spacing:0.037px;">02 - Acro #2</span>
<div style="left:3417.5px;top:127px;width:20px;height:17px;background:#fffef6;border:1px solid #cfcfcf;"></div>
<svg style="left:3417.5px;top:127px" width="20" height="17" viewBox="0 0 20 17"><path d="M4 8.5 L8.2 13 L16 3.2" fill="none" stroke="#111" stroke-width="2.6"/></svg>
<span class="t" style="left:3446.00px;top:127px;font-size:18px;color:#f0f0f0;letter-spacing:-0.219px;">Active</span>
<span class="t" style="left:3191.70px;top:171px;font-size:17px;color:#f0f0f0;letter-spacing:-0.397px;">Position</span>
<span class="t" style="left:3257.00px;top:168px;font-size:17px;color:#4d8df0;letter-spacing:-0.272px;text-decoration:underline;text-underline-offset:2px;text-decoration-thickness:1.2px;">0.00</span>
<div style="left:3291.5px;top:172.8px;width:1.7px;height:3.2px;background:#e8e8e8;"></div>
<div style="left:3294.1px;top:172.8px;width:1.7px;height:3.2px;background:#e8e8e8;"></div>
<div style="left:3200px;top:193.6px;width:578.7px;height:5.2px;background:#e2e2e2;"></div>
<div style="left:3200px;top:193.6px;width:3px;height:5.2px;background:#f08a5c;"></div>
<svg style="left:3185.5px;top:190.5px" width="12.5" height="12"><path d="M12.5 0 V12 L0 6 Z" fill="#22a95e"/></svg>
<svg style="left:3781px;top:190.5px" width="12.5" height="12"><path d="M0 0 V12 L12.5 6 Z" fill="#22a95e"/></svg>
<div style="left:3166px;top:238.5px;width:647.6px;height:30.5px;background:#333333;"></div>
<svg style="left:3171.4px;top:244.1px" width="19.2" height="19.2" viewBox="0 0 20 20"><circle cx="10" cy="10" r="10" fill="#fffef6"/><path d="M5 12.3 L10 7.2 L15 12.3" fill="none" stroke="#2a2a2a" stroke-width="2.6"/></svg>
<span class="t" style="left:3202.50px;top:245px;font-size:19px;color:#fff;font-weight:700;letter-spacing:-0.352px;">Network</span>
<div style="left:3169px;top:269px;width:641px;height:213.5px;background:#404040;"></div>
<span class="t" style="left:3296.20px;top:286px;font-size:17px;color:#f0f0f0;letter-spacing:-0.376px;">Network Status</span>
<span class="t" style="left:3414.00px;top:286px;font-size:17px;color:#fff;font-weight:700;letter-spacing:-0.649px;">Connected</span>
<span class="t" style="left:3331.20px;top:318px;font-size:17px;color:#f0f0f0;letter-spacing:-0.690px;">IP Address</span>
<div style="left:3416.7px;top:309px;width:147px;height:26.5px;background:#232323;border:1px solid #2c2c2c;"></div>
<span class="t" style="left:3421.00px;top:313px;font-size:18px;color:#f2f2f2;letter-spacing:-0.652px;">192.168.10.101</span>
<span class="t" style="left:3321.70px;top:350px;font-size:17px;color:#f0f0f0;letter-spacing:-0.479px;">Auto Repair</span>
<div style="left:3415.7px;top:341px;width:20px;height:17px;background:#fffef6;border:1px solid #cfcfcf;"></div>
<div style="left:3363px;top:375.7px;width:252.5px;height:41.3px;background:#3a3839;border:1.5px solid #909090;"></div>
<span class="t" style="left:3456.50px;top:388px;font-size:19px;color:#f2f2f2;letter-spacing:-0.753px;">Connect</span>
<div style="left:3363px;top:429.5px;width:252.5px;height:41.2px;background:#3a3839;border:1.5px solid #909090;"></div>
<span class="t" style="left:3446.00px;top:442px;font-size:19px;color:#f2f2f2;letter-spacing:-0.699px;">Disconnect</span>
<div style="left:3166px;top:487px;width:647.6px;height:29.5px;background:#333333;"></div>
<svg style="left:3171.4px;top:491.6px" width="19.2" height="19.2" viewBox="0 0 20 20"><circle cx="10" cy="10" r="10" fill="#fffef6"/><path d="M5 12.3 L10 7.2 L15 12.3" fill="none" stroke="#2a2a2a" stroke-width="2.6"/></svg>
<span class="t" style="left:3202.50px;top:493px;font-size:19px;color:#fff;font-weight:700;letter-spacing:-0.930px;">Position</span>
<div style="left:3169px;top:516.5px;width:641px;height:277.2px;background:#404040;"></div>
<span class="t" style="left:3325.70px;top:527px;font-size:17.5px;color:#a9a9a9;font-style:italic;letter-spacing:-0.089px;">Must be between -2.00" and 3,745,224.77"</span>
<span class="t" style="left:3267.50px;top:557px;font-size:17px;color:#f0f0f0;letter-spacing:-0.507px;">Max OUT Position</span>
<div style="left:3408px;top:549.2px;width:164.5px;height:25.8px;background:#232323;border:1px solid #2c2c2c;"></div>
<span class="t" style="left:3517.50px;top:553px;font-size:18px;color:#f2f2f2;letter-spacing:-0.509px;">450.00</span>
<div style="left:3575.7px;top:559.5px;width:1.7px;height:3.2px;background:#e8e8e8;"></div>
<div style="left:3578.3px;top:559.5px;width:1.7px;height:3.2px;background:#e8e8e8;"></div>
<span class="t" style="left:3316.20px;top:584px;font-size:17.5px;color:#a9a9a9;font-style:italic;letter-spacing:-0.100px;">Must be between -3,745,224.77" and 450.00"</span>
<span class="t" style="left:3285.70px;top:614px;font-size:17px;color:#f0f0f0;letter-spacing:-0.201px;">Min IN Position</span>
<div style="left:3408px;top:606.2px;width:164.5px;height:25.8px;background:#232323;border:1px solid #2c2c2c;"></div>
<span class="t" style="left:3530.00px;top:609px;font-size:18px;color:#f2f2f2;letter-spacing:-0.306px;">-2.00</span>
<div style="left:3575.7px;top:616.5px;width:1.7px;height:3.2px;background:#e8e8e8;"></div>
<div style="left:3578.3px;top:616.5px;width:1.7px;height:3.2px;background:#e8e8e8;"></div>
<span class="t" style="left:3297.50px;top:648px;font-size:17px;color:#4d8df0;letter-spacing:-0.588px;text-decoration:underline;text-underline-offset:2px;text-decoration-thickness:1.2px;">Position Scale</span>
<div style="left:3408px;top:639.2px;width:164.5px;height:25.8px;background:#232323;border:1px solid #2c2c2c;"></div>
<span class="t" style="left:3440.00px;top:643px;font-size:18px;color:#f2f2f2;letter-spacing:-0.403px;">286.6962305987</span>
<div style="left:3575.7px;top:649.5px;width:1.7px;height:3.2px;background:#e8e8e8;"></div>
<div style="left:3578.3px;top:649.5px;width:1.7px;height:3.2px;background:#e8e8e8;"></div>
<span class="t" style="left:3298.00px;top:680px;font-size:17px;color:#f0f0f0;letter-spacing:-0.352px;">Position Units</span>
<div style="left:3406.2px;top:671.2px;width:166.3px;height:26.8px;background:#232323;border:1px solid #2c2c2c;"></div>
<span class="t" style="left:3412.50px;top:676px;font-size:18px;color:#f2f2f2;letter-spacing:-0.422px;">inches</span>
<svg style="left:3553.5px;top:682px" width="12" height="6"><path d="M0 0 H12 L6 6 Z" fill="#9a9a9a"/></svg>
<span class="t" style="left:3279.20px;top:712px;font-size:17px;color:#f0f0f0;letter-spacing:-0.473px;">Target Tolerance</span>
<div style="left:3408px;top:703.7px;width:164.5px;height:25.8px;background:#232323;border:1px solid #2c2c2c;"></div>
<span class="t" style="left:3547.00px;top:707px;font-size:18px;color:#f2f2f2;letter-spacing:-0.841px;">0.1</span>
<div style="left:3575.7px;top:714px;width:1.7px;height:3.2px;background:#e8e8e8;"></div>
<div style="left:3578.3px;top:714px;width:1.7px;height:3.2px;background:#e8e8e8;"></div>
<div style="left:3410.7px;top:739.5px;width:157.3px;height:41px;background:#3a3839;border:1.5px solid #909090;"></div>
<span class="t" style="left:3420.00px;top:752px;font-size:19px;color:#f2f2f2;letter-spacing:-0.655px;">Absolute Encoder</span>
<div style="left:3166px;top:797.5px;width:647.6px;height:28.7px;background:#333333;"></div>
<svg style="left:3171.4px;top:801.6px" width="19.2" height="19.2" viewBox="0 0 20 20"><circle cx="10" cy="10" r="10" fill="#fffef6"/><path d="M5 12.3 L10 7.2 L15 12.3" fill="none" stroke="#2a2a2a" stroke-width="2.6"/></svg>
<span class="t" style="left:3202.50px;top:802px;font-size:19px;color:#fff;font-weight:700;letter-spacing:-1.304px;">Speed</span>
<div style="left:3169px;top:826.2px;width:641px;height:423.8px;background:#404040;"></div>
<span class="t" style="left:3360.70px;top:843px;font-size:17px;color:#f0f0f0;letter-spacing:-0.732px;">Speed</span>
<span class="t" style="left:3532.50px;top:843px;font-size:17px;color:#fff;font-weight:700;letter-spacing:-0.137px;">0.00"/sec</span>
<span class="t" style="left:3280.50px;top:874px;font-size:17px;color:#f0f0f0;letter-spacing:-0.508px;">Command Speed</span>
<span class="t" style="left:3532.50px;top:874px;font-size:17px;color:#fff;font-weight:700;letter-spacing:-0.137px;">0.00"/sec</span>
<span class="t" style="left:3287.50px;top:911px;font-size:17px;color:#f0f0f0;letter-spacing:-0.390px;">Command Accel</span>
<span class="t" style="left:3532.50px;top:911px;font-size:17px;color:#fff;font-weight:700;letter-spacing:-0.137px;">0.00"/sec</span>
<span class="t" style="left:3605.50px;top:912px;font-size:10px;color:#fff;font-weight:700;">2</span>
<span class="t" style="left:3217.00px;top:948px;font-size:17px;color:#f0f0f0;letter-spacing:-0.521px;">At Zero Speed Brakes Are:</span>
<span class="t" style="left:3498.70px;top:948px;font-size:17px;color:#fff;font-weight:700;letter-spacing:-0.684px;">Engaged</span>
<span class="t" style="left:3325.70px;top:980px;font-size:17px;color:#f0f0f0;letter-spacing:-0.611px;">Max Speed</span>
<div style="left:3416.7px;top:971.2px;width:147px;height:25.8px;background:#232323;border:1px solid #2c2c2c;"></div>
<span class="t" style="left:3541.70px;top:975px;font-size:18px;color:#f2f2f2;letter-spacing:-0.611px;">96</span>
<span class="t" style="left:3566.20px;top:980px;font-size:17px;color:#f0f0f0;letter-spacing:-0.342px;">"/sec</span>
<span class="t" style="left:3304.20px;top:1017px;font-size:17px;color:#f0f0f0;letter-spacing:-0.442px;">Default Speed</span>
<div style="left:3416.7px;top:1008.2px;width:147px;height:26px;background:#232323;border:1px solid #2c2c2c;"></div>
<span class="t" style="left:3541.70px;top:1012px;font-size:18px;color:#f2f2f2;letter-spacing:-0.611px;">48</span>
<span class="t" style="left:3566.20px;top:1017px;font-size:17px;color:#f0f0f0;letter-spacing:-0.342px;">"/sec</span>
<span class="t" style="left:3311.20px;top:1058px;font-size:17px;color:#f0f0f0;letter-spacing:-0.325px;">Default Accel</span>
<div style="left:3416.7px;top:1050px;width:147px;height:26.2px;background:#232323;border:1px solid #2c2c2c;"></div>
<span class="t" style="left:3541.70px;top:1054px;font-size:18px;color:#f2f2f2;letter-spacing:-0.611px;">48</span>
<span class="t" style="left:3566.20px;top:1058px;font-size:17px;color:#f0f0f0;letter-spacing:-0.342px;">"/sec</span>
<span class="t" style="left:3602.00px;top:1059px;font-size:10px;color:#f0f0f0;">2</span>
<span class="t" style="left:3309.20px;top:1100px;font-size:17px;color:#f0f0f0;letter-spacing:-0.388px;">Default Decel</span>
<div style="left:3416.7px;top:1091.2px;width:147px;height:26.3px;background:#232323;border:1px solid #2c2c2c;"></div>
<span class="t" style="left:3541.70px;top:1095px;font-size:18px;color:#f2f2f2;letter-spacing:-0.611px;">48</span>
<span class="t" style="left:3566.20px;top:1100px;font-size:17px;color:#f0f0f0;letter-spacing:-0.342px;">"/sec</span>
<span class="t" style="left:3602.00px;top:1100px;font-size:10px;color:#f0f0f0;">2</span>
<span class="t" style="left:3263.20px;top:1137px;font-size:17px;color:#f0f0f0;letter-spacing:-0.428px;">Max Jogging Speed</span>
<div style="left:3416.7px;top:1128px;width:147px;height:26.2px;background:#232323;border:1px solid #2c2c2c;"></div>
<span class="t" style="left:3542.00px;top:1131px;font-size:18px;color:#f2f2f2;letter-spacing:-0.761px;">50</span>
<span class="t" style="left:3566.20px;top:1137px;font-size:15.5px;color:#f0f0f0;">%</span>
<span class="t" style="left:3265.70px;top:1170px;font-size:17px;color:#f0f0f0;letter-spacing:-0.297px;">Min Jogging Speed</span>
<div style="left:3416.7px;top:1160.7px;width:147px;height:26.8px;background:#232323;border:1px solid #2c2c2c;"></div>
<span class="t" style="left:3550.49px;top:1165px;font-size:18px;color:#f2f2f2;">1</span>
<span class="t" style="left:3566.20px;top:1169px;font-size:15.5px;color:#f0f0f0;">%</span>
<div style="left:3420px;top:1197.5px;width:139.2px;height:41.2px;background:#3a3839;border:1.5px solid #909090;"></div>
<span class="t" style="left:3433.70px;top:1209px;font-size:19px;color:#f2f2f2;letter-spacing:-0.824px;">Configure SLZ</span>
<div style="left:3166px;top:1255.5px;width:647.6px;height:28.2px;background:#333333;"></div>
<svg style="left:3171.4px;top:1259.6px" width="19.2" height="19.2" viewBox="0 0 20 20"><circle cx="10" cy="10" r="10" fill="#fffef6"/><path d="M5 12.3 L10 7.2 L15 12.3" fill="none" stroke="#2a2a2a" stroke-width="2.6"/></svg>
<span class="t" style="left:3202.50px;top:1260px;font-size:19px;color:#fff;font-weight:700;letter-spacing:-1.471px;">Load</span>
<div style="left:3169px;top:1283.7px;width:641px;height:130px;background:#404040;"></div>
<span class="t" style="left:3329.50px;top:1301px;font-size:17px;color:#f0f0f0;letter-spacing:-0.578px;">Load Cell Status</span>
<span class="t" style="left:3453.00px;top:1301px;font-size:17px;color:#fff;font-weight:700;letter-spacing:-0.399px;">Unknown</span>
<div style="left:3197px;top:1332px;width:585px;height:5px;background:#e4e4e4;"></div>
<div style="left:3197px;top:1332px;width:487.5px;height:5px;background:#f0875a;"></div>
<svg style="left:3182.5px;top:1328px" width="12" height="12"><path d="M0 0 H12 L6 12 Z" fill="#9a9a9a"/></svg>
<svg style="left:3784.5px;top:1328.5px" width="12" height="12"><path d="M0 12 H12 L6 0 Z" fill="#9a9a9a"/></svg>
<svg style="left:3215px;top:1332.5px" width="12.5" height="12"><path d="M0 12 H12.5 L6.25 0 Z" fill="#22a95e"/></svg>
<div style="left:3297.5px;top:1354.2px;width:120px;height:47.8px;background:#3a3839;border:1.5px solid #909090;"></div>
<div style="left:3429.2px;top:1354.2px;width:120px;height:47.8px;background:#3a3839;border:1.5px solid #909090;"></div>
<div style="left:3561.5px;top:1354.2px;width:120.2px;height:47.8px;background:#3a3839;border:1.5px solid #909090;"></div>
<span class="t" style="left:3583.00px;top:1369px;font-size:19px;color:#f2f2f2;letter-spacing:-0.520px;">Configure</span>
<svg style="left:3344.5px;top:1362px" width="26" height="32" viewBox="0 0 26 32"><g fill="none" stroke="#22a95e" stroke-width="3" stroke-linecap="round"><path d="M1.5 25.5 H24.5 M5 25 V14 C5 7.5 8.5 4.6 13 4.6 C17.5 4.6 21 7.5 21 14 V25"/></g><circle cx="13" cy="2.6" r="1.8" fill="#22a95e"/><path d="M10 28 H16 L13 31.5 Z" fill="#22a95e"/></svg>
<svg style="left:3475px;top:1362px" width="30" height="32" viewBox="0 0 30 32"><g fill="none" stroke="#e0102d" stroke-width="3" stroke-linecap="round"><path d="M3.5 25.5 H22 M7 25 V14.5 M9.5 7.5 C11 5.5 13 4.6 15 4.6 C19.5 4.6 23 7.5 23 14 V19"/><path d="M4.5 3.5 L27 26.5" stroke-width="3.2"/></g><circle cx="15" cy="2.6" r="1.8" fill="#e0102d"/><path d="M12 28 H18 L15 31.5 Z" fill="#e0102d"/></svg>
<div style="left:3166px;top:1418.7px;width:647.6px;height:28.8px;background:#333333;"></div>
<svg style="left:3171.4px;top:1422.9px" width="19.2" height="19.2" viewBox="0 0 20 20"><circle cx="10" cy="10" r="10" fill="#fffef6"/><path d="M5 12.3 L10 7.2 L15 12.3" fill="none" stroke="#2a2a2a" stroke-width="2.6"/></svg>
<span class="t" style="left:3202.50px;top:1423px;font-size:19px;color:#fff;font-weight:700;letter-spacing:-0.816px;">Tuning</span>
<div style="left:3169px;top:1447.5px;width:641px;height:300px;background:#404040;"></div>
<span class="t" style="left:3278.20px;top:1465px;font-size:17px;color:#f0f0f0;letter-spacing:-0.253px;">Proportional Gain</span>
<div style="left:3416.7px;top:1455.7px;width:147px;height:26.3px;background:#232323;border:1px solid #2c2c2c;"></div>
<span class="t" style="left:3420.30px;top:1459px;font-size:18px;color:#f2f2f2;">45</span>
<span class="t" style="left:3296.70px;top:1498px;font-size:17px;color:#f0f0f0;letter-spacing:-0.447px;">Derivative Gain</span>
<div style="left:3416.7px;top:1488.7px;width:147px;height:26.3px;background:#232323;border:1px solid #2c2c2c;"></div>
<span class="t" style="left:3420.30px;top:1493px;font-size:18px;color:#f2f2f2;">10</span>
<span class="t" style="left:3261.70px;top:1531px;font-size:17px;color:#f0f0f0;letter-spacing:-0.351px;">Derivative Sampling</span>
<div style="left:3416.7px;top:1521.7px;width:147px;height:26.3px;background:#232323;border:1px solid #2c2c2c;"></div>
<span class="t" style="left:3420.30px;top:1526px;font-size:18px;color:#f2f2f2;">1</span>
<span class="t" style="left:3313.20px;top:1564px;font-size:17px;color:#f0f0f0;letter-spacing:-0.333px;">Integral Gain</span>
<div style="left:3416.7px;top:1555px;width:147px;height:26.2px;background:#232323;border:1px solid #2c2c2c;"></div>
<span class="t" style="left:3420.30px;top:1559px;font-size:18px;color:#f2f2f2;">0</span>
<span class="t" style="left:3310.70px;top:1597px;font-size:17px;color:#f0f0f0;letter-spacing:-0.130px;">Integral Limit</span>
<div style="left:3416.7px;top:1588px;width:147px;height:26.2px;background:#232323;border:1px solid #2c2c2c;"></div>
<span class="t" style="left:3420.30px;top:1592px;font-size:18px;color:#f2f2f2;">0</span>
<span class="t" style="left:3312.50px;top:1628px;font-size:17px;color:#f0f0f0;letter-spacing:-0.425px;">Filter Loaded</span>
<span class="t" style="left:3414.50px;top:1628px;font-size:17px;color:#fff;font-weight:700;letter-spacing:-1.254px;">False</span>
<span class="t" style="left:3297.00px;top:1660px;font-size:17px;color:#f0f0f0;letter-spacing:-0.232px;">Integrator Sum</span>
<span class="t" style="left:3414.20px;top:1660px;font-size:17px;color:#fff;font-weight:700;">0</span>
<span class="t" style="left:3237.00px;top:1690px;font-size:17px;color:#f0f0f0;">Integrator Contribution</span>
<span class="t" style="left:3414.20px;top:1690px;font-size:17px;color:#fff;font-weight:700;">0</span>
<span class="t" style="left:3334.50px;top:1722px;font-size:17px;color:#f0f0f0;letter-spacing:-0.388px;">Derivative</span>
<span class="t" style="left:3414.20px;top:1722px;font-size:17px;color:#fff;font-weight:700;">0</span>
<div style="left:3166px;top:1752.5px;width:647.6px;height:28.7px;background:#333333;"></div>
<svg style="left:3171.4px;top:1756.6px" width="19.2" height="19.2" viewBox="0 0 20 20"><circle cx="10" cy="10" r="10" fill="#fffef6"/><path d="M5 12.3 L10 7.2 L15 12.3" fill="none" stroke="#2a2a2a" stroke-width="2.6"/></svg>
<span class="t" style="left:3202.50px;top:1757px;font-size:19px;color:#fff;font-weight:700;letter-spacing:-0.766px;">Drive</span>
<div style="left:3169px;top:1781.2px;width:641px;height:201.8px;background:#404040;"></div>
<span class="t" style="left:3301.50px;top:1798px;font-size:17px;color:#f0f0f0;letter-spacing:-0.318px;">Stagehand Model</span>
<span class="t" style="left:3438.20px;top:1798px;font-size:17px;color:#fff;font-weight:700;letter-spacing:-0.312px;">Undetectable</span>
<span class="t" style="left:3181.00px;top:1829px;font-size:17px;color:#f0f0f0;letter-spacing:-0.121px;">An undetectable drive could result from a communication configuration error.</span>
<span class="t" style="left:3181.00px;top:1851px;font-size:17px;color:#f0f0f0;letter-spacing:-0.416px;">For Stagehand Pro set parameter Pr.332 to 384</span>
<span class="t" style="left:3181.00px;top:1872px;font-size:17px;color:#f0f0f0;letter-spacing:-0.322px;">For Stagehand Apprentice set parameter Pr.118 to 384</span>
<span class="t" style="left:3353.20px;top:1902px;font-size:17px;color:#1f6fd0;font-weight:700;letter-spacing:-0.379px;text-decoration:underline;text-underline-offset:2px;text-decoration-thickness:1.5px;">Read the step by step guide online.</span>
<div style="left:3363.2px;top:1929px;width:251.9px;height:41.5px;background:#3a3839;border:1.5px solid #909090;"></div>
<span class="t" style="left:3445.20px;top:1940px;font-size:19px;color:#9c9c9c;letter-spacing:-1.004px;">Reset Drive</span>
<div style="left:3166px;top:1988px;width:647.6px;height:28.5px;background:#333333;"></div>
<svg style="left:3171.4px;top:1991.5px" width="19.2" height="19.2" viewBox="0 0 20 20"><circle cx="10" cy="10" r="10" fill="#fffef6"/><path d="M5 12.3 L10 7.2 L15 12.3" fill="none" stroke="#2a2a2a" stroke-width="2.6"/></svg>
<span class="t" style="left:3202.50px;top:1992px;font-size:19px;color:#fff;font-weight:700;letter-spacing:-1.072px;">Schematic</span>
<div style="left:3169px;top:2016.5px;width:641px;height:71.5px;background:#404040;"></div>
<span class="t" style="left:3389.00px;top:2027px;font-size:17.5px;color:#c4c4c4;font-style:italic;">All dimensions are in feet.</span>
<span class="t" style="left:3234.50px;top:2058px;font-size:17px;color:#f0f0f0;letter-spacing:-0.356px;">Distance from Center</span>
<div style="left:3399px;top:2048.8px;width:182px;height:26.2px;background:#232323;border:1px solid #2c2c2c;"></div>
<span class="t" style="left:3545.80px;top:2052px;font-size:18px;color:#f2f2f2;letter-spacing:-0.708px;">0.00</span>
<div style="left:3584.5px;top:2059px;width:1.6px;height:3.6px;background:#e8e8e8;"></div>
<div style="left:3482.2px;top:2080.4px;width:15px;height:8px;background:#c8c8c8;"></div>
<div style="left:3814px;top:238.5px;width:26px;height:1850px;background:#222222;"></div>
<div style="left:3815px;top:238.5px;width:23.5px;height:1123.5px;background:linear-gradient(90deg,#3a3a3a,#404040 50%,#383838);"></div>
</body></html>
